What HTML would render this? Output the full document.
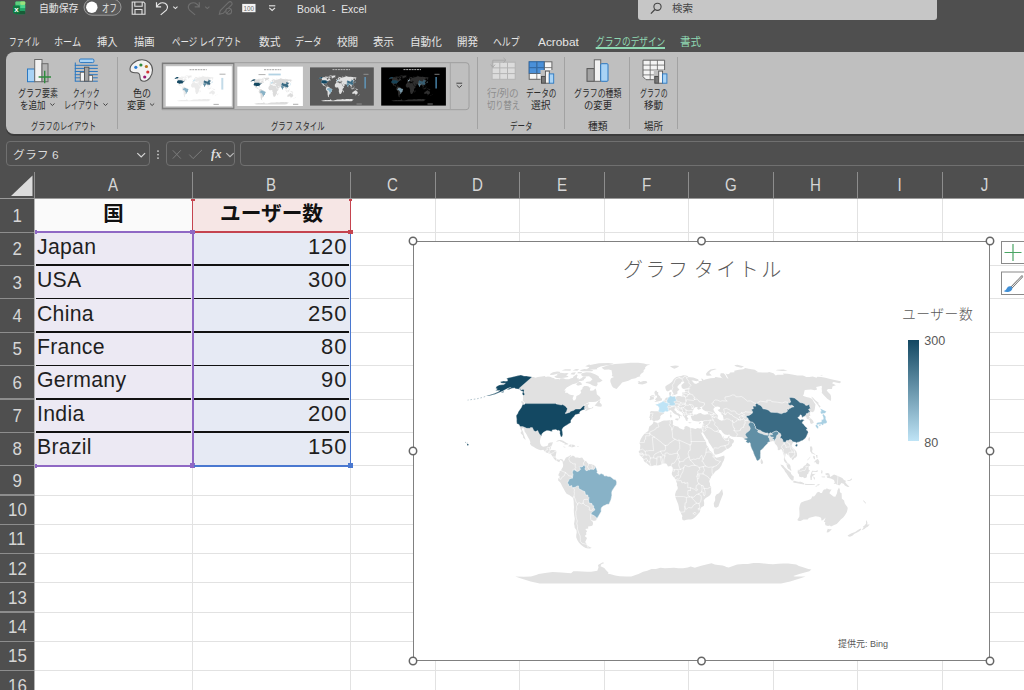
<!DOCTYPE html>
<html lang="ja">
<head>
<meta charset="utf-8">
<title>Book1 - Excel</title>
<style>
html,body{margin:0;padding:0}
#app{position:relative;width:1024px;height:690px;overflow:hidden;background:#fff}
body{width:1024px;height:690px;overflow:hidden;position:relative;background:#fff;font-family:"Liberation Sans","Noto Sans CJK JP",sans-serif}
.abs{position:absolute}
.t{position:absolute;white-space:pre;line-height:16px;transform-origin:0 50%}
#top{position:absolute;left:0;top:0;width:1024px;height:199px;background:#4f4f4f}
#search{position:absolute;left:638px;top:0;width:299px;height:20px;background:#c6c6c6;border-radius:0 0 3px 3px}
#ribbon{position:absolute;left:6px;top:52px;width:1030px;height:82px;background:#bfbfbf;border-radius:8px;box-shadow:0 2px 0 #3b3b3b}
.sep{position:absolute;top:57px;width:1px;height:72px;background:#a2a2a2}
.box{position:absolute;top:141px;height:25px;border:1px solid #707070;border-radius:4px;box-sizing:border-box}
#rowhdr{position:absolute;left:0;top:199px;width:34px;height:491px;background:#4f4f4f}
.ch{position:absolute;top:172px;height:27px;line-height:26px;text-align:center;color:#d6d6d6;font-size:18px}
.ch i{display:inline-block;font-style:normal;transform:scaleX(.84)}
.rh{position:absolute;left:0;width:34px;text-align:center;color:#d6d6d6;font-size:18.800px}
.rh i{display:inline-block;font-style:normal;transform:scaleX(.9)}
.cell{position:absolute;font-size:20px;color:#1f1f1f;white-space:pre}
</style>
</head>

<body>
<div id="app">
<div id="top"></div>
<div id="search"></div>
<div id="ribbon"></div>
<div class="sep" style="left:117px"></div>
<div class="sep" style="left:477px"></div>
<div class="sep" style="left:564px"></div>
<div class="sep" style="left:629px"></div>
<div class="sep" style="left:677px"></div>
<div class="box" style="left:6px;width:144px"></div>
<div class="box" style="left:166px;width:69px"></div>
<div class="box" style="left:240px;width:800px"></div>

<div id="grid">
<div class="abs" style="left:34.5px;top:198.5px;width:158.0px;height:33.7px;background:#fafafa"></div>
<div class="abs" style="left:192.5px;top:198.5px;width:158.0px;height:33.7px;background:#f6e6e5"></div>
<div class="abs" style="left:34.5px;top:232.2px;width:158.0px;height:233.6px;background:#ece9f3"></div>
<div class="abs" style="left:192.5px;top:232.2px;width:158.0px;height:233.6px;background:#e6eaf4"></div>
<div class="abs" style="left:192.0px;top:198.5px;width:1.0px;height:491.5px;background:#e2e2e2"></div>
<div class="abs" style="left:350.0px;top:198.5px;width:1.0px;height:491.5px;background:#e2e2e2"></div>
<div class="abs" style="left:434.5px;top:198.5px;width:1.0px;height:491.5px;background:#e2e2e2"></div>
<div class="abs" style="left:519.0px;top:198.5px;width:1.0px;height:491.5px;background:#e2e2e2"></div>
<div class="abs" style="left:603.5px;top:198.5px;width:1.0px;height:491.5px;background:#e2e2e2"></div>
<div class="abs" style="left:688.0px;top:198.5px;width:1.0px;height:491.5px;background:#e2e2e2"></div>
<div class="abs" style="left:772.5px;top:198.5px;width:1.0px;height:491.5px;background:#e2e2e2"></div>
<div class="abs" style="left:857.0px;top:198.5px;width:1.0px;height:491.5px;background:#e2e2e2"></div>
<div class="abs" style="left:941.5px;top:198.5px;width:1.0px;height:491.5px;background:#e2e2e2"></div>
<div class="abs" style="left:34.5px;top:231.7px;width:989.5px;height:1.0px;background:#e2e2e2"></div>
<div class="abs" style="left:34.5px;top:265.1px;width:989.5px;height:1.0px;background:#e2e2e2"></div>
<div class="abs" style="left:34.5px;top:298.4px;width:989.5px;height:1.0px;background:#e2e2e2"></div>
<div class="abs" style="left:34.5px;top:331.8px;width:989.5px;height:1.0px;background:#e2e2e2"></div>
<div class="abs" style="left:34.5px;top:365.2px;width:989.5px;height:1.0px;background:#e2e2e2"></div>
<div class="abs" style="left:34.5px;top:398.5px;width:989.5px;height:1.0px;background:#e2e2e2"></div>
<div class="abs" style="left:34.5px;top:431.9px;width:989.5px;height:1.0px;background:#e2e2e2"></div>
<div class="abs" style="left:34.5px;top:465.3px;width:989.5px;height:1.0px;background:#e2e2e2"></div>
<div class="abs" style="left:34.5px;top:494.5px;width:989.5px;height:1.0px;background:#e2e2e2"></div>
<div class="abs" style="left:34.5px;top:523.8px;width:989.5px;height:1.0px;background:#e2e2e2"></div>
<div class="abs" style="left:34.5px;top:553.0px;width:989.5px;height:1.0px;background:#e2e2e2"></div>
<div class="abs" style="left:34.5px;top:582.3px;width:989.5px;height:1.0px;background:#e2e2e2"></div>
<div class="abs" style="left:34.5px;top:611.5px;width:989.5px;height:1.0px;background:#e2e2e2"></div>
<div class="abs" style="left:34.5px;top:640.8px;width:989.5px;height:1.0px;background:#e2e2e2"></div>
<div class="abs" style="left:34.5px;top:670.0px;width:989.5px;height:1.0px;background:#e2e2e2"></div>
<div class="abs" style="left:34.5px;top:699.3px;width:989.5px;height:1.0px;background:#e2e2e2"></div>
<div class="abs" style="left:35.5px;top:264.4px;width:155.5px;height:1.8px;background:#111"></div>
<div class="abs" style="left:194.0px;top:264.4px;width:155.0px;height:1.8px;background:#111"></div>
<div class="abs" style="left:35.5px;top:297.7px;width:155.5px;height:1.8px;background:#111"></div>
<div class="abs" style="left:194.0px;top:297.7px;width:155.0px;height:1.8px;background:#111"></div>
<div class="abs" style="left:35.5px;top:331.1px;width:155.5px;height:1.8px;background:#111"></div>
<div class="abs" style="left:194.0px;top:331.1px;width:155.0px;height:1.8px;background:#111"></div>
<div class="abs" style="left:35.5px;top:364.5px;width:155.5px;height:1.8px;background:#111"></div>
<div class="abs" style="left:194.0px;top:364.5px;width:155.0px;height:1.8px;background:#111"></div>
<div class="abs" style="left:35.5px;top:397.8px;width:155.5px;height:1.8px;background:#111"></div>
<div class="abs" style="left:194.0px;top:397.8px;width:155.0px;height:1.8px;background:#111"></div>
<div class="abs" style="left:35.5px;top:431.2px;width:155.5px;height:1.8px;background:#111"></div>
<div class="abs" style="left:194.0px;top:431.2px;width:155.0px;height:1.8px;background:#111"></div>
<div class="abs" style="left:34.5px;top:231.2px;width:159.0px;height:2.0px;background:#8f68c4"></div>
<div class="abs" style="left:34.5px;top:464.8px;width:159.0px;height:2.0px;background:#8f68c4"></div>
<div class="abs" style="left:191.5px;top:232.2px;width:2.0px;height:233.6px;background:#8f68c4"></div>
<div class="abs" style="left:190.0px;top:463.3px;width:4.5px;height:4.5px;background:#8f68c4"></div>
<div class="abs" style="left:34.5px;top:230.2px;width:2.0px;height:4.0px;background:#8f68c4"></div>
<div class="abs" style="left:34.5px;top:463.8px;width:2.0px;height:4.0px;background:#8f68c4"></div>
<div class="abs" style="left:192.2px;top:198.5px;width:1.3px;height:33.7px;background:#c5444f"></div>
<div class="abs" style="left:349.7px;top:198.5px;width:1.4px;height:33.7px;background:#c5444f"></div>
<div class="abs" style="left:194.0px;top:231.3px;width:156.5px;height:1.7px;background:#c5444f"></div>
<div class="abs" style="left:348.0px;top:229.7px;width:4.5px;height:4.5px;background:#c5444f"></div>
<div class="abs" style="left:191.0px;top:198.5px;width:3.5px;height:2.5px;background:#c5444f"></div>
<div class="abs" style="left:348.5px;top:198.5px;width:3.5px;height:2.5px;background:#c5444f"></div>
<div class="abs" style="left:349.5px;top:234.2px;width:1.8px;height:231.6px;background:#4a78d0"></div>
<div class="abs" style="left:193.5px;top:464.8px;width:157.0px;height:2.0px;background:#4a78d0"></div>
<div class="abs" style="left:348.0px;top:463.3px;width:4.5px;height:4.5px;background:#4a78d0"></div>
<div class="abs" style="left:190.0px;top:229.7px;width:4.5px;height:4.5px;background:#8f68c4"></div>
<div id="rowhdr"></div>
<div class="abs" style="left:34.0px;top:172.0px;width:1.0px;height:26.5px;background:#8d8d8d"></div>
<div class="abs" style="left:192.0px;top:172.0px;width:1.0px;height:26.5px;background:#8d8d8d"></div>
<div class="abs" style="left:350.0px;top:172.0px;width:1.0px;height:26.5px;background:#8d8d8d"></div>
<div class="abs" style="left:434.5px;top:172.0px;width:1.0px;height:26.5px;background:#8d8d8d"></div>
<div class="abs" style="left:519.0px;top:172.0px;width:1.0px;height:26.5px;background:#8d8d8d"></div>
<div class="abs" style="left:603.5px;top:172.0px;width:1.0px;height:26.5px;background:#8d8d8d"></div>
<div class="abs" style="left:688.0px;top:172.0px;width:1.0px;height:26.5px;background:#8d8d8d"></div>
<div class="abs" style="left:772.5px;top:172.0px;width:1.0px;height:26.5px;background:#8d8d8d"></div>
<div class="abs" style="left:857.0px;top:172.0px;width:1.0px;height:26.5px;background:#8d8d8d"></div>
<div class="abs" style="left:941.5px;top:172.0px;width:1.0px;height:26.5px;background:#8d8d8d"></div>
<div class="abs" style="left:0.0px;top:198.0px;width:1024.0px;height:1.0px;background:#9a9a9a"></div>
<div class="abs" style="left:34.0px;top:199.0px;width:1.0px;height:491.0px;background:#b4b4b4"></div>
<div class="abs" style="left:0.0px;top:231.6px;width:34.0px;height:1.2px;background:#8d8d8d"></div>
<div class="abs" style="left:0.0px;top:265.0px;width:34.0px;height:1.2px;background:#8d8d8d"></div>
<div class="abs" style="left:0.0px;top:298.3px;width:34.0px;height:1.2px;background:#8d8d8d"></div>
<div class="abs" style="left:0.0px;top:331.7px;width:34.0px;height:1.2px;background:#8d8d8d"></div>
<div class="abs" style="left:0.0px;top:365.1px;width:34.0px;height:1.2px;background:#8d8d8d"></div>
<div class="abs" style="left:0.0px;top:398.4px;width:34.0px;height:1.2px;background:#8d8d8d"></div>
<div class="abs" style="left:0.0px;top:431.8px;width:34.0px;height:1.2px;background:#8d8d8d"></div>
<div class="abs" style="left:0.0px;top:465.2px;width:34.0px;height:1.2px;background:#8d8d8d"></div>
<div class="abs" style="left:0.0px;top:494.4px;width:34.0px;height:1.2px;background:#8d8d8d"></div>
<div class="abs" style="left:0.0px;top:523.7px;width:34.0px;height:1.2px;background:#8d8d8d"></div>
<div class="abs" style="left:0.0px;top:552.9px;width:34.0px;height:1.2px;background:#8d8d8d"></div>
<div class="abs" style="left:0.0px;top:582.2px;width:34.0px;height:1.2px;background:#8d8d8d"></div>
<div class="abs" style="left:0.0px;top:611.4px;width:34.0px;height:1.2px;background:#8d8d8d"></div>
<div class="abs" style="left:0.0px;top:640.7px;width:34.0px;height:1.2px;background:#8d8d8d"></div>
<div class="abs" style="left:0.0px;top:669.9px;width:34.0px;height:1.2px;background:#8d8d8d"></div>
<div class="abs" style="left:0.0px;top:699.2px;width:34.0px;height:1.2px;background:#8d8d8d"></div>
<div class="ch" style="left:34.5px;width:158.0px"><i>A</i></div>
<div class="ch" style="left:192.5px;width:158.0px"><i>B</i></div>
<div class="ch" style="left:350.5px;width:84.5px"><i>C</i></div>
<div class="ch" style="left:435.0px;width:84.5px"><i>D</i></div>
<div class="ch" style="left:519.5px;width:84.5px"><i>E</i></div>
<div class="ch" style="left:604.0px;width:84.5px"><i>F</i></div>
<div class="ch" style="left:688.5px;width:84.5px"><i>G</i></div>
<div class="ch" style="left:773.0px;width:84.5px"><i>H</i></div>
<div class="ch" style="left:857.5px;width:84.5px"><i>I</i></div>
<div class="ch" style="left:942.0px;width:84.5px"><i>J</i></div>
<div class="rh" style="top:198.5px;height:33.7px;line-height:34.7px"><i>1</i></div>
<div class="rh" style="top:232.2px;height:33.4px;line-height:34.4px"><i>2</i></div>
<div class="rh" style="top:265.6px;height:33.4px;line-height:34.4px"><i>3</i></div>
<div class="rh" style="top:298.9px;height:33.4px;line-height:34.4px"><i>4</i></div>
<div class="rh" style="top:332.3px;height:33.4px;line-height:34.4px"><i>5</i></div>
<div class="rh" style="top:365.7px;height:33.4px;line-height:34.4px"><i>6</i></div>
<div class="rh" style="top:399.0px;height:33.4px;line-height:34.4px"><i>7</i></div>
<div class="rh" style="top:432.4px;height:33.4px;line-height:34.4px"><i>8</i></div>
<div class="rh" style="top:465.8px;height:29.2px;line-height:30.2px"><i>9</i></div>
<div class="rh" style="top:495.0px;height:29.2px;line-height:30.2px"><i>10</i></div>
<div class="rh" style="top:524.3px;height:29.2px;line-height:30.2px"><i>11</i></div>
<div class="rh" style="top:553.5px;height:29.2px;line-height:30.2px"><i>12</i></div>
<div class="rh" style="top:582.8px;height:29.2px;line-height:30.2px"><i>13</i></div>
<div class="rh" style="top:612.0px;height:29.2px;line-height:30.2px"><i>14</i></div>
<div class="rh" style="top:641.3px;height:29.2px;line-height:30.2px"><i>15</i></div>
<div class="rh" style="top:670.5px;height:29.2px;line-height:30.2px"><i>16</i></div>
<svg class="abs" style="left:0;top:172px" width="35" height="27"><polygon points="32.5,3.5 32.5,24 11,24" fill="#dcdcdc"/></svg>
<span class="cell" style="left:37.2px;top:234.8px;font-size:22px;line-height:24px;letter-spacing:0.3px;transform:scaleX(0.965);transform-origin:0 50%">Japan</span>
<span class="cell" style="right:676.7px;top:234.8px;font-size:22px;line-height:24px;letter-spacing:0.9px;transform:scaleX(1.0);transform-origin:100% 50%">120</span>
<span class="cell" style="left:37.2px;top:268.2px;font-size:22px;line-height:24px;letter-spacing:0.3px;transform:scaleX(0.965);transform-origin:0 50%">USA</span>
<span class="cell" style="right:676.7px;top:268.2px;font-size:22px;line-height:24px;letter-spacing:0.9px;transform:scaleX(1.0);transform-origin:100% 50%">300</span>
<span class="cell" style="left:37.2px;top:301.6px;font-size:22px;line-height:24px;letter-spacing:0.3px;transform:scaleX(0.965);transform-origin:0 50%">China</span>
<span class="cell" style="right:676.7px;top:301.6px;font-size:22px;line-height:24px;letter-spacing:0.9px;transform:scaleX(1.0);transform-origin:100% 50%">250</span>
<span class="cell" style="left:37.2px;top:335.0px;font-size:22px;line-height:24px;letter-spacing:0.3px;transform:scaleX(0.965);transform-origin:0 50%">France</span>
<span class="cell" style="right:676.7px;top:335.0px;font-size:22px;line-height:24px;letter-spacing:0.9px;transform:scaleX(1.0);transform-origin:100% 50%">80</span>
<span class="cell" style="left:37.2px;top:368.3px;font-size:22px;line-height:24px;letter-spacing:0.3px;transform:scaleX(0.965);transform-origin:0 50%">Germany</span>
<span class="cell" style="right:676.7px;top:368.3px;font-size:22px;line-height:24px;letter-spacing:0.9px;transform:scaleX(1.0);transform-origin:100% 50%">90</span>
<span class="cell" style="left:37.2px;top:401.7px;font-size:22px;line-height:24px;letter-spacing:0.3px;transform:scaleX(0.965);transform-origin:0 50%">India</span>
<span class="cell" style="right:676.7px;top:401.7px;font-size:22px;line-height:24px;letter-spacing:0.9px;transform:scaleX(1.0);transform-origin:100% 50%">200</span>
<span class="cell" style="left:37.2px;top:435.1px;font-size:22px;line-height:24px;letter-spacing:0.3px;transform:scaleX(0.965);transform-origin:0 50%">Brazil</span>
<span class="cell" style="right:676.7px;top:435.1px;font-size:22px;line-height:24px;letter-spacing:0.9px;transform:scaleX(1.0);transform-origin:100% 50%">150</span>
<span class="cell" style="left:34.5px;width:158.0px;text-align:center;top:201.5px;line-height:24px;font-size:20.5px;font-weight:bold;color:#111">国</span>
<span class="cell" style="left:192.5px;width:158.0px;text-align:center;top:201.5px;line-height:24px;font-size:20.700px;font-weight:bold;color:#111">ユーザー数</span>
</div>
<div id="chart" class="abs" style="left:412.5px;top:240.5px;width:577px;height:420px;background:#fff;border:1.5px solid #808080;box-sizing:border-box"></div>
<svg class="abs" style="left:0;top:0" width="1024" height="690" viewBox="0 0 1024 690">
<g color="#e1e1e1"><g id="wml"><path d="M500.5,381.8 503.6,381.1 505.5,381.2 507.7,381.0 507.3,380.1 507.5,379.3 506.4,378.6 508.7,377.8 512.1,377.0 515.2,376.2 518.3,375.6 520.9,375.0 522.5,375.5 523.9,376.1 526.6,376.1 529.1,376.5 532.1,377.0 533.8,377.1 535.3,377.8 537.9,377.1 541.7,376.6 544.8,375.9 545.7,377.1 547.7,376.5 550.1,376.8 552.3,377.7 554.5,378.3 554.6,379.2 558.4,379.1 559.8,379.5 560.6,378.2 563.2,378.3 565.7,379.2 569.0,379.2 571.1,378.3 572.7,378.0 573.5,376.5 576.9,374.3 577.7,375.4 576.8,376.9 577.1,378.3 579.2,378.6 578.4,379.8 581.9,378.0 582.8,376.8 586.0,376.8 585.6,378.2 583.8,379.2 584.3,380.1 581.5,381.1 579.2,381.0 578.4,382.3 576.2,383.2 574.8,383.8 572.5,384.3 569.4,386.0 566.7,387.6 564.1,390.5 565.7,390.6 564.9,392.8 567.4,392.8 569.1,394.2 571.2,395.1 573.9,395.3 572.6,398.2 572.8,399.2 573.5,400.5 575.0,400.2 576.1,398.4 576.4,396.1 579.2,394.8 581.2,392.8 580.5,390.5 582.4,388.9 582.5,387.6 584.2,385.9 586.6,386.0 588.7,386.6 589.2,387.5 590.6,387.6 589.8,390.2 590.8,390.7 593.3,390.5 595.0,388.9 595.7,388.5 596.3,390.5 596.6,392.2 596.8,394.2 597.9,395.2 599.5,396.5 600.6,398.2 600.4,399.1 599.0,400.2 596.0,401.8 592.7,401.9 589.4,401.9 586.8,403.2 584.1,404.7 581.2,406.5 583.2,405.7 586.0,403.9 588.9,403.3 589.5,403.9 587.8,405.0 588.2,406.3 588.1,407.4 589.6,408.0 591.2,408.3 593.2,406.6 593.1,407.9 591.0,408.8 588.5,409.7 585.6,411.2 585.3,410.1 587.4,408.6 585.4,409.0 584.7,409.4 582.7,410.1 580.5,411.1 579.5,412.5 579.9,413.6 578.0,414.1 575.2,414.8 574.7,415.4 574.0,416.8 572.9,417.6 571.9,418.9 570.9,420.3 570.8,421.4 570.8,422.8 569.2,423.5 567.4,424.7 565.7,425.7 563.4,427.2 562.4,428.8 562.0,429.7 562.5,432.3 562.7,434.7 562.0,436.8 561.1,437.1 560.4,435.5 559.8,433.3 560.0,431.6 559.0,430.2 557.5,430.6 555.9,429.6 554.1,429.7 552.2,429.9 552.2,431.4 550.7,431.3 549.0,430.7 546.8,430.6 545.2,431.3 543.1,432.6 541.8,434.0 541.5,435.9 540.4,438.6 539.9,441.0 540.2,443.4 541.4,445.7 543.1,446.8 545.7,446.3 547.6,445.7 548.6,443.1 550.5,442.4 553.0,442.2 552.0,445.0 551.2,446.4 550.5,449.2 549.9,450.1 553.3,450.1 555.7,450.6 556.6,451.3 556.0,454.2 555.5,457.0 556.3,458.4 557.5,459.5 559.4,459.8 560.7,459.0 562.5,459.4 563.4,460.4 562.5,462.3 561.8,460.8 560.2,459.9 559.3,462.2 557.4,461.2 555.6,460.5 553.8,458.4 552.9,457.0 551.0,454.2 549.2,453.6 546.8,452.7 545.2,451.9 543.3,449.8 540.8,450.3 538.4,449.6 536.1,448.5 533.8,447.1 531.5,445.7 529.9,443.7 530.4,442.2 529.4,439.6 528.0,437.2 526.8,434.8 525.9,433.3 524.6,431.6 524.2,428.8 522.5,427.8 521.9,429.5 523.2,432.3 523.8,434.4 524.5,436.5 525.3,438.6 525.6,440.0 524.8,439.3 523.0,437.5 523.1,435.8 521.5,434.1 520.5,433.0 521.7,430.9 520.5,429.0 520.0,426.6 519.1,424.5 516.9,423.7 516.6,420.9 516.7,419.2 516.3,416.8 516.3,415.5 517.9,413.3 518.2,411.9 521.4,407.4 522.6,404.4 524.4,404.6 525.2,403.6 525.1,403.2 524.0,401.8 522.6,400.2 523.1,398.8 522.9,396.4 523.5,395.5 522.7,394.8 522.3,393.5 523.1,391.5 521.4,391.1 520.5,390.5 519.8,389.2 517.5,388.9 515.6,388.8 514.6,387.9 512.2,388.3 509.7,389.2 506.8,390.0 508.7,388.3 511.2,387.4 508.3,388.1 505.0,389.8 502.4,391.3 498.6,392.8 495.1,394.2 491.3,395.2 488.5,395.9 486.3,396.1 491.1,394.4 494.3,393.5 498.2,391.8 500.0,390.6 498.5,390.6 495.5,390.6 497.4,388.9 495.7,388.3 496.3,387.0 496.6,386.4 499.2,385.1 501.5,384.8 503.9,384.5 505.5,383.2 503.6,383.2 500.9,383.1 500.5,381.8Z M601.6,367.4 608.4,365.2 614.9,363.9 622.8,363.5 630.8,362.8 638.2,362.7 643.9,363.5 646.6,364.3 650.4,364.5 647.1,365.6 645.2,367.2 645.2,368.7 643.6,370.3 643.6,371.9 641.1,373.7 639.8,375.4 640.6,376.2 637.6,377.1 635.5,378.3 631.7,378.9 628.4,380.7 624.8,381.7 622.1,382.6 620.6,384.5 618.3,387.0 616.6,388.9 615.2,388.6 613.1,387.6 611.8,385.7 611.1,383.8 610.4,382.0 610.3,380.1 611.1,378.3 614.0,377.1 611.8,375.9 612.3,374.2 611.9,372.5 611.6,370.3 608.8,369.6 604.4,369.8 602.9,368.7 601.6,367.4Z M596.2,386.5 592.7,385.6 590.1,384.1 587.8,383.2 585.4,383.1 586.7,381.8 590.2,381.6 592.5,379.2 590.6,377.4 589.1,376.3 584.3,376.6 582.8,376.2 581.0,375.1 582.0,373.3 586.3,372.2 590.4,372.4 592.4,373.2 595.0,374.3 597.4,375.4 598.8,376.5 599.0,377.7 601.3,379.4 602.6,380.5 599.8,382.2 597.2,382.6 597.7,384.5 596.2,386.5Z M568.2,376.9 564.1,377.8 559.2,378.2 555.9,377.8 554.3,376.6 557.7,374.9 556.5,373.7 560.6,372.7 564.5,373.2 567.0,372.9 568.6,373.4 566.1,375.4 568.3,376.3 568.2,376.9Z M549.9,374.3 550.7,375.1 553.8,374.8 560.1,372.9 559.7,371.7 557.1,371.4 552.9,372.3 550.4,373.7Z M597.4,369.2 593.8,369.6 586.5,369.3 589.2,367.7 588.9,365.2 593.9,364.3 599.0,363.3 608.3,363.0 613.8,363.5 610.3,364.8 605.6,365.6 600.7,366.6 596.8,368.2Z M592.2,371.3 582.0,371.2 579.6,370.3 584.3,369.1 589.7,369.5 593.2,370.2Z M590.2,367.5 585.2,366.3 589.0,364.6 591.1,365.3Z M570.5,370.8 561.5,370.6 565.1,369.2 570.9,369.2Z M581.3,373.4 577.1,373.2 578.2,372.1 582.2,371.9Z M574.2,374.8 570.4,374.2 571.9,372.7 575.9,372.2Z M577.3,370.8 572.5,370.6 576.0,369.1 579.2,369.2Z M582.2,384.5 577.9,385.7 576.0,384.2 579.2,381.7 581.0,382.6Z M594.6,405.4 597.9,406.6 601.2,406.8 601.9,405.5 601.4,404.0 599.6,402.5 600.3,400.1 598.4,401.1 595.8,404.3Z M524.2,404.4 522.1,403.9 521.0,401.3 523.1,401.5 524.2,403.2Z M555.7,441.6 558.2,440.2 560.7,439.9 563.1,440.7 565.4,442.2 567.1,443.3 568.6,444.0 567.6,444.4 564.2,444.6 565.0,443.4 563.4,442.9 561.7,441.9 559.4,441.0 557.4,441.5Z M568.1,446.3 570.0,444.4 571.9,444.4 574.3,445.0 575.6,446.3 574.2,446.7 571.6,447.5 570.4,446.8Z M563.3,446.5 565.7,447.0 565.0,447.4 563.3,447.1Z M577.0,446.4 578.9,446.5 578.7,447.1 577.0,447.1Z M563.4,460.4 564.0,461.2 565.0,459.2 565.8,457.7 567.1,457.0 569.0,456.3 570.3,455.3 571.2,455.0 570.7,457.0 572.8,455.4 574.6,456.6 575.2,457.5 577.7,457.5 579.5,458.1 582.1,457.4 582.9,458.4 584.1,460.5 586.3,461.2 587.5,462.9 588.7,464.0 591.2,464.2 592.5,464.3 594.3,465.4 595.5,466.3 596.8,469.7 597.4,471.4 596.8,472.5 599.3,474.6 601.2,473.5 603.7,474.6 604.4,476.0 606.3,475.8 608.2,476.5 610.0,476.4 611.9,477.8 613.6,479.3 615.7,479.7 616.5,481.5 616.7,482.9 616.2,484.9 614.6,487.0 613.5,488.8 612.3,490.5 611.7,492.5 611.9,495.3 611.4,497.4 610.9,499.9 609.8,502.2 609.3,503.6 608.7,504.3 606.9,504.3 605.1,505.3 603.3,506.0 601.6,507.5 601.1,509.1 601.2,511.6 599.9,513.7 598.9,515.4 597.8,517.2 596.7,519.1 596.2,520.3 595.0,520.8 593.3,520.8 591.4,520.1 590.7,519.9 592.5,521.6 593.1,523.0 592.7,525.2 591.5,526.0 588.1,526.4 588.3,528.5 585.3,529.1 587.1,531.2 586.1,532.6 586.4,534.6 584.7,536.0 587.0,538.0 586.1,540.0 585.2,542.0 586.9,544.5 587.8,546.0 590.2,547.3 591.7,547.7 590.1,548.4 588.1,548.6 585.7,548.0 583.5,546.7 581.2,545.1 579.0,542.7 577.3,540.0 576.2,537.3 576.3,534.6 576.7,532.6 576.5,530.2 574.7,527.8 574.5,525.7 574.0,523.9 574.4,521.6 574.8,518.8 574.2,515.4 573.9,512.6 573.8,509.8 574.0,507.1 573.8,505.0 573.7,501.5 573.2,498.1 571.7,496.7 569.6,495.3 566.6,493.7 565.1,491.6 563.8,489.1 562.2,486.3 560.9,483.6 559.9,481.9 558.3,480.8 558.1,478.7 559.3,477.2 559.7,476.6 558.4,475.5 558.6,473.9 559.6,472.4 559.5,471.4 560.9,470.4 561.6,469.0 562.9,466.9 563.2,464.7 562.5,462.3Z M653.4,422.0 654.1,421.8 656.8,422.7 658.0,423.0 660.4,422.0 662.2,421.0 663.9,420.6 666.3,420.6 669.2,420.3 671.9,419.9 672.5,420.6 673.3,420.3 672.8,421.7 673.2,423.1 672.6,424.2 673.5,425.2 675.4,426.1 678.4,426.8 679.0,428.0 680.9,428.8 683.4,429.7 684.5,428.8 684.4,426.9 686.1,426.1 688.0,426.5 690.5,427.9 692.9,428.3 695.4,428.9 697.7,428.0 699.3,428.5 699.8,430.3 701.6,434.0 703.3,437.2 704.3,439.3 706.0,441.5 706.5,445.0 708.2,447.1 709.6,450.6 711.6,452.0 713.5,454.2 714.6,454.9 714.5,456.3 716.2,457.7 718.7,457.3 721.1,456.6 724.2,455.6 724.6,457.7 723.8,460.5 722.6,462.6 721.4,465.4 719.6,468.3 717.7,470.0 715.8,471.1 713.9,473.2 712.7,474.9 711.4,476.0 710.7,478.0 709.7,479.4 709.2,481.5 710.0,483.6 710.0,485.6 711.2,487.0 711.1,489.8 711.3,492.5 710.2,494.9 708.3,496.4 705.7,498.1 703.7,500.2 704.2,502.9 704.0,505.7 700.8,507.8 700.5,509.1 699.9,511.9 698.3,513.7 696.8,515.6 694.5,517.8 692.6,519.1 691.0,519.5 688.4,519.6 686.6,519.8 684.2,520.6 682.8,519.9 682.3,519.5 682.0,517.7 682.4,516.1 681.3,514.0 680.4,511.9 679.1,509.8 678.8,507.1 678.2,504.2 677.1,501.5 675.9,498.5 675.1,496.0 675.1,494.3 676.0,491.2 677.7,489.1 677.7,487.0 676.7,484.9 677.2,484.0 675.9,480.8 675.8,479.4 674.2,477.8 672.7,476.0 671.7,473.9 672.1,471.8 672.7,470.4 672.7,468.3 672.4,466.9 671.1,466.0 669.2,466.3 668.0,466.4 667.1,464.7 666.1,463.6 663.5,463.6 661.7,464.3 659.1,465.2 657.3,465.6 654.7,465.2 652.9,465.7 651.0,466.3 649.1,465.3 647.2,463.6 645.9,462.8 644.7,461.9 643.7,460.5 643.5,458.7 641.9,457.3 641.0,456.3 639.5,455.0 639.4,453.4 638.6,451.8 639.9,449.9 640.2,447.1 640.3,445.0 639.4,442.9 640.7,439.3 642.3,436.5 644.6,433.4 646.4,432.3 648.3,430.9 648.7,428.8 649.3,426.6 651.4,424.9 652.7,423.8Z M722.1,489.1 723.1,493.9 722.3,496.0 720.4,500.8 718.4,506.4 716.1,507.8 714.3,507.1 713.7,503.6 715.2,500.2 715.1,496.7 716.4,494.6 719.0,493.2 721.0,490.5Z M649.8,420.3 650.1,418.2 649.3,417.8 650.1,414.7 649.9,411.9 651.3,410.9 654.1,411.2 656.4,411.2 658.3,411.3 658.9,409.8 659.1,407.7 658.0,406.1 655.2,404.7 657.1,403.9 658.5,404.0 658.6,402.8 660.1,403.2 660.6,402.6 662.0,401.9 663.1,400.9 664.2,400.3 664.9,399.5 665.5,398.2 666.8,397.5 667.8,397.4 669.4,397.1 669.6,396.1 669.3,394.8 668.9,392.8 670.5,392.1 671.2,391.9 671.3,393.5 670.9,394.8 670.7,395.7 672.0,396.4 673.3,396.4 674.7,396.3 675.6,397.0 677.8,396.1 679.9,395.9 681.0,396.3 682.5,395.5 682.2,393.5 682.5,392.2 684.2,392.8 685.3,391.8 684.8,390.2 684.2,389.8 686.7,389.4 688.7,389.3 690.8,389.0 688.9,388.3 686.5,388.4 683.6,389.0 681.9,388.1 681.5,386.6 681.4,385.1 683.5,383.2 684.5,382.2 683.2,381.6 681.5,381.7 680.8,383.2 678.9,384.8 677.5,386.4 677.6,388.0 679.4,389.2 678.7,390.2 677.3,391.5 677.5,393.5 676.9,394.0 675.4,394.7 674.0,394.9 673.7,393.9 672.8,392.2 671.8,390.2 671.0,389.6 669.6,390.6 667.8,391.5 666.2,390.5 665.4,388.3 665.3,386.4 667.2,385.1 669.1,384.1 670.8,382.8 672.2,381.4 673.4,379.5 674.7,378.3 676.3,377.1 678.5,376.5 681.1,375.9 683.3,375.3 685.9,375.4 688.4,376.2 687.7,376.9 690.5,377.2 693.3,377.5 698.0,379.2 698.9,380.5 696.8,381.2 693.3,380.6 691.4,380.4 693.2,382.0 693.9,383.2 696.2,384.0 697.0,383.2 698.8,382.9 698.3,381.4 700.0,380.9 702.0,381.1 701.2,378.4 703.0,378.9 703.5,380.3 705.1,379.4 709.3,378.6 710.6,378.3 714.6,378.0 715.4,376.9 718.8,377.4 720.8,377.7 723.6,378.6 721.8,377.7 720.1,375.4 720.7,373.3 723.6,373.2 725.2,374.8 726.8,377.7 728.5,378.9 725.5,373.3 727.0,374.2 729.1,374.0 730.1,372.5 734.5,372.2 734.2,370.8 738.9,369.8 743.3,369.2 745.2,368.0 748.5,368.8 754.8,369.8 758.0,371.9 755.0,371.9 757.8,372.2 762.7,372.6 767.4,372.6 769.3,372.1 773.5,373.3 775.7,375.4 777.5,374.7 780.3,374.8 783.9,374.8 782.8,373.4 787.7,373.8 793.5,374.7 797.4,375.5 802.9,375.6 806.4,377.0 809.4,376.9 812.7,376.6 816.5,377.7 817.4,376.8 821.2,376.9 825.4,377.8 831.2,379.2 837.0,380.5 840.6,381.2 840.8,382.6 839.4,383.2 833.7,382.0 832.7,382.6 832.1,383.2 835.9,385.2 834.2,385.7 832.4,386.6 832.0,388.9 827.9,388.9 826.7,390.5 828.2,392.2 830.2,394.2 830.9,395.7 831.1,397.9 831.1,399.5 830.6,400.9 827.3,398.8 824.1,395.5 821.7,392.8 822.0,391.3 821.6,388.6 822.0,387.0 821.4,385.7 818.6,386.6 816.1,387.0 817.1,389.6 814.7,390.2 811.0,389.6 807.7,389.8 804.8,390.0 804.2,391.9 803.8,394.2 802.9,395.7 806.3,397.0 809.7,397.8 812.2,399.1 814.0,402.2 815.5,404.6 815.1,406.8 814.7,409.4 814.1,411.2 812.5,412.2 810.4,411.6 810.2,412.9 809.9,414.0 810.4,415.4 808.7,416.4 810.6,418.2 812.7,420.3 813.8,422.4 813.1,423.3 811.0,424.0 810.1,422.4 809.8,420.6 808.2,419.2 806.9,418.9 806.2,416.8 804.9,416.1 803.0,416.9 802.0,417.8 801.7,415.4 800.2,414.8 799.4,416.6 797.8,417.5 798.6,418.6 800.3,419.9 802.0,419.2 804.5,420.0 802.8,421.4 802.1,423.1 803.7,424.2 805.0,426.2 806.9,427.8 807.4,428.9 806.0,429.7 807.9,430.9 808.2,432.6 807.3,434.4 806.7,436.1 805.8,437.8 804.2,439.3 802.6,440.5 800.9,441.0 799.2,441.9 796.8,442.4 796.5,443.9 795.8,442.2 794.0,442.0 792.6,442.9 792.2,444.0 791.5,445.7 792.7,447.8 794.2,449.2 796.1,450.9 797.0,453.4 797.1,455.8 795.8,457.4 794.3,458.0 794.0,459.1 792.2,460.2 791.8,458.4 790.1,457.5 789.0,455.8 787.3,454.6 786.5,453.6 785.6,453.6 785.4,455.6 784.9,457.7 785.3,459.5 786.3,460.8 787.1,462.6 788.4,463.3 789.3,464.0 790.5,466.1 790.7,468.5 791.6,470.5 790.8,470.7 789.5,469.5 787.9,468.4 787.0,466.6 786.5,464.3 785.7,462.9 784.3,461.2 783.8,459.8 784.0,457.7 783.9,455.6 783.0,452.7 782.2,450.6 781.7,449.2 780.5,449.2 779.1,450.2 777.8,449.9 777.8,447.8 776.9,445.7 775.5,444.3 774.5,443.1 773.5,441.0 771.9,441.2 770.2,441.7 769.0,441.9 767.8,442.4 767.7,443.6 766.3,444.7 764.8,446.3 763.0,448.5 761.9,449.5 760.5,450.6 760.5,453.4 760.4,455.6 760.5,458.0 759.5,459.4 758.7,459.9 757.7,461.1 756.4,459.8 755.7,457.7 754.5,455.6 753.7,453.4 753.0,451.3 751.9,449.2 751.0,447.1 750.6,445.4 750.2,442.9 749.7,442.6 748.0,443.3 745.7,441.5 746.9,440.2 744.6,439.6 744.2,439.1 743.0,437.8 742.2,437.2 739.4,436.9 736.4,437.1 735.8,437.1 732.7,436.7 730.4,436.0 729.3,434.4 727.5,435.0 725.0,434.4 723.0,433.1 721.1,430.3 719.6,429.7 719.1,430.2 718.6,431.2 719.7,433.0 721.4,434.8 721.9,436.5 722.7,437.4 723.0,435.7 723.7,437.2 723.6,438.2 725.5,438.5 727.3,438.2 728.9,435.8 729.3,435.4 729.6,437.5 731.1,438.9 732.7,439.3 734.1,440.7 733.3,442.9 732.1,443.7 731.9,445.7 730.5,447.1 728.8,448.5 726.4,449.2 724.0,450.9 721.6,452.7 719.1,453.7 716.7,454.4 714.8,454.6 714.1,453.0 713.8,451.3 713.5,449.4 711.9,447.1 710.6,445.0 708.8,442.4 708.0,440.0 706.4,438.2 705.0,435.8 703.2,433.0 702.7,430.9 702.2,433.0 701.9,433.3 700.8,431.9 699.8,430.3 699.3,428.5 701.6,428.3 702.2,426.6 702.4,425.2 703.1,423.7 702.9,421.7 703.1,420.9 701.1,420.7 698.8,421.6 696.4,421.3 694.6,420.9 692.6,420.6 691.4,418.2 691.0,416.8 690.8,415.9 692.3,415.5 694.0,415.5 694.1,414.4 696.7,414.4 698.9,413.3 700.8,413.1 702.5,414.3 704.9,414.8 708.2,414.0 707.9,412.3 705.3,410.9 703.5,409.9 702.1,408.8 702.3,407.0 703.3,406.2 701.2,406.8 699.6,407.4 701.5,408.6 700.5,409.1 698.3,409.8 697.0,408.4 698.0,407.6 695.9,406.9 694.6,407.7 693.9,408.8 693.1,410.5 692.4,411.9 692.3,412.9 692.9,414.0 693.9,414.5 692.2,414.7 690.8,415.1 690.5,415.2 688.1,415.0 687.7,415.8 686.8,415.5 687.0,417.1 688.5,418.6 687.6,419.2 687.5,421.0 686.7,421.0 685.8,420.3 685.2,418.5 683.9,416.8 682.9,415.4 682.8,413.6 681.6,412.6 679.8,411.5 678.0,410.2 676.8,408.8 675.8,408.3 674.3,408.7 674.5,410.2 675.9,411.2 677.0,412.9 678.8,413.4 679.1,414.0 681.9,415.8 681.7,416.4 680.1,415.4 679.7,416.4 680.3,417.5 679.7,418.3 678.8,419.0 679.1,417.8 678.6,416.1 677.2,415.1 674.8,414.0 673.0,412.6 672.1,411.2 670.6,410.1 668.9,410.8 667.2,411.8 665.0,411.2 664.0,412.6 664.1,413.4 661.3,415.0 660.1,416.8 660.4,417.9 659.6,419.2 658.0,420.6 655.1,420.7 653.8,421.7 653.0,420.6 651.6,420.0Z M654.2,402.1 656.6,401.8 658.8,401.3 661.8,400.6 662.2,398.6 660.7,398.2 660.2,396.5 658.8,395.2 658.1,394.2 658.3,392.1 656.8,391.9 657.1,390.7 655.3,390.7 654.4,392.2 654.7,394.2 655.4,394.8 655.1,395.7 656.7,395.6 657.2,397.1 657.0,397.8 655.6,397.8 655.9,398.8 654.8,399.8 656.6,400.3 655.5,400.9Z M653.9,399.2 653.8,397.5 654.6,396.1 653.6,395.2 651.8,395.2 649.8,396.5 650.3,397.9 649.3,399.5 650.1,400.2 652.3,399.5Z M638.6,384.0 642.4,384.6 646.4,383.2 647.4,382.2 646.2,381.0 643.4,381.1 640.4,382.0 639.2,380.9 637.6,381.8 639.3,382.6 637.6,382.8Z M669.9,366.3 672.6,368.1 674.4,368.7 677.3,367.5 679.3,366.0 675.3,365.6Z M706.4,375.4 708.0,375.7 711.8,375.4 709.2,373.1 711.3,370.8 716.9,368.9 714.7,368.7 710.4,369.6 707.8,371.4 706.0,373.7Z M736.0,366.6 741.3,367.7 744.0,366.6 737.4,364.8 734.2,365.2Z M775.7,370.3 782.0,371.0 787.6,370.8 783.6,369.6 777.3,369.8Z M820.0,375.4 822.1,374.8 822.6,375.6Z M819.7,407.7 820.6,406.6 817.8,403.6 819.2,403.3 815.3,400.2 813.1,397.8 811.2,396.4 812.2,398.2 814.3,400.9 817.2,404.3Z M809.5,441.5 810.0,437.9 809.4,436.9 808.6,437.9 808.2,440.0Z M795.1,445.4 796.3,446.8 797.4,446.0 797.8,444.7 796.5,444.1Z M760.6,461.2 761.1,458.8 762.5,460.5 763.2,462.6 762.6,463.8 761.2,464.0 760.7,462.6Z M810.2,449.9 809.9,446.4 812.0,446.4 812.5,449.2 812.0,451.3 812.7,452.7 815.4,454.2 815.2,454.7 811.5,453.2 810.9,452.0 810.1,451.3Z M813.7,462.6 815.4,460.5 817.8,458.7 819.3,461.2 819.1,463.6 818.2,464.6 816.3,463.6 815.5,461.9Z M815.9,454.9 817.4,455.1 817.5,458.1 816.5,457.7Z M813.1,455.8 814.8,456.3 815.1,459.5 814.1,459.1 813.3,457.7Z M807.5,460.6 810.2,457.5 810.3,456.6 809.3,457.7 807.2,459.9Z M797.9,469.8 799.3,470.1 800.5,468.8 802.7,468.0 803.9,466.1 805.7,465.0 807.1,462.8 808.4,463.6 810.4,465.2 808.9,466.4 808.6,467.6 808.7,469.7 810.3,471.1 808.8,471.4 808.4,473.6 807.1,474.6 806.8,477.3 804.8,478.2 802.7,476.9 801.1,477.3 799.1,476.5 798.9,474.3 797.7,472.9 797.7,471.1Z M780.3,464.6 783.1,465.2 784.6,467.3 787.0,469.4 788.9,471.1 790.8,472.5 791.2,473.9 792.2,475.3 793.8,476.6 793.5,480.5 791.8,480.4 790.0,478.7 788.2,476.2 786.7,473.7 785.1,471.8 784.2,469.7 781.9,467.3Z M792.6,481.9 794.3,480.8 796.8,481.5 799.3,481.9 799.9,481.5 802.0,482.2 804.2,483.3 804.1,484.5 801.0,484.1 797.3,483.3 794.2,482.7Z M810.6,480.1 811.8,480.1 812.0,476.6 813.0,476.6 814.6,477.3 815.1,479.7 813.9,479.1 813.5,477.5 812.6,476.2 814.0,475.0 815.7,473.7 813.4,473.9 811.8,473.6 812.8,471.8 817.3,471.9 818.1,470.2 815.3,471.1 812.2,470.8 811.3,472.5 810.2,476.6Z M804.8,483.8 807.3,484.0 809.8,484.0 812.3,484.1 814.8,484.0 814.8,484.7 811.0,484.9 807.2,484.9 804.7,484.7Z M815.2,486.7 817.3,484.5 819.8,484.1 819.2,484.9 816.5,486.6Z M821.0,473.2 821.6,469.7 822.5,471.1 822.3,473.5Z M821.5,476.6 825.1,476.6 824.7,477.6 821.8,477.3Z M825.4,473.6 827.3,473.1 829.2,473.6 830.3,477.1 834.0,474.6 837.9,476.1 842.3,477.9 844.0,480.1 846.2,480.9 845.1,481.9 846.8,484.3 849.5,486.7 847.8,486.9 844.8,485.6 843.7,483.7 841.3,483.1 839.8,485.2 837.3,485.1 835.6,483.7 833.7,484.1 834.8,482.5 834.0,480.1 830.9,478.6 828.4,478.0 827.5,478.0 826.6,476.4 828.9,475.7 826.6,475.3 825.3,474.3Z M847.2,480.2 849.7,480.1 851.7,478.3 852.0,479.4 850.3,480.8 847.7,481.1Z M800.5,503.6 801.1,502.6 804.8,501.0 807.7,500.2 811.0,499.0 812.4,496.3 814.0,496.4 815.4,494.9 817.0,492.5 819.0,491.7 820.5,493.0 822.0,493.1 822.9,490.8 824.0,489.6 826.2,489.2 826.5,488.3 829.3,489.4 831.6,489.4 830.2,491.4 829.4,493.2 831.6,494.9 833.5,496.6 835.3,496.7 837.0,493.2 837.5,490.2 839.0,487.4 839.9,489.8 839.9,492.3 841.6,493.2 841.8,496.7 841.8,498.6 844.1,500.4 844.7,503.3 845.8,505.0 847.4,507.1 847.7,508.4 846.9,511.9 844.8,515.4 843.2,517.4 840.8,519.4 838.6,521.9 836.7,524.1 834.1,524.9 831.0,526.5 829.9,525.4 828.0,526.1 825.5,525.3 825.0,523.6 825.3,521.9 823.8,521.9 824.6,520.2 825.6,517.6 823.7,519.5 822.1,520.6 821.5,520.5 821.1,517.8 818.9,516.7 815.5,516.2 811.5,517.2 808.8,518.1 807.7,519.4 803.5,519.4 800.6,520.9 798.8,520.9 797.3,519.9 799.3,516.7 799.5,514.0 799.4,511.2 799.2,508.4 799.7,505.7Z M827.8,528.7 829.5,529.3 831.8,529.0 830.4,530.8 828.6,532.3 826.7,532.6 826.9,530.9Z M866.0,520.1 867.0,521.6 867.5,523.0 867.0,524.5 869.7,524.5 867.7,526.7 866.1,527.4 864.5,528.9 862.2,530.0 862.0,529.4 863.6,527.8 862.9,526.8 864.8,525.3 866.1,523.6 866.0,521.6Z M860.5,528.5 861.3,529.4 859.7,530.9 857.1,532.6 854.5,533.7 852.3,535.7 849.9,536.8 848.1,536.2 847.6,535.6 851.0,533.5 855.1,531.9 857.6,530.2Z M863.3,500.3 864.8,501.5 866.2,503.3 865.5,503.5 863.6,501.5 863.0,500.6Z M515.3,576.6 524.0,576.8 531.0,576.4 533.6,575.7 536.1,574.9 538.7,574.1 545.1,572.9 552.7,572.1 561.5,572.4 571.1,573.2 573.3,571.3 577.6,571.3 586.8,571.8 591.2,571.8 597.3,570.7 598.5,567.4 598.0,565.1 600.2,563.8 602.3,562.6 603.8,562.4 603.6,563.4 601.5,564.0 600.5,566.3 604.3,568.0 606.1,570.2 608.4,572.4 608.2,573.9 609.9,573.9 615.2,575.4 619.8,576.2 626.4,576.4 631.3,576.4 635.5,574.9 638.5,573.9 643.1,571.8 647.2,570.7 651.5,569.1 655.9,568.9 660.4,567.8 664.9,568.2 669.5,568.0 674.0,567.8 678.5,568.2 683.0,568.3 687.7,567.4 690.7,566.6 694.9,567.8 697.0,566.9 702.2,565.5 707.3,564.3 711.6,563.3 714.7,564.6 718.1,565.1 722.6,565.5 724.9,566.3 726.3,566.9 728.7,567.4 732.2,566.3 737.2,564.6 743.2,564.1 748.0,564.0 753.4,563.1 759.1,563.1 764.3,563.6 768.7,564.0 773.0,564.3 778.4,563.8 783.5,563.4 788.2,563.4 792.1,564.1 796.2,564.6 798.9,566.1 802.3,566.9 805.3,568.0 808.3,568.9 811.4,569.6 809.4,571.3 804.8,572.4 799.3,573.9 793.3,575.9 794.7,576.4 799.1,576.6 805.5,576.6 801.3,578.1 795.7,579.8 790.2,581.5 785.6,582.4 781.1,583.4 539.7,583.4 535.2,582.4 530.6,581.5 525.1,579.8 519.5,578.1Z M674.9,418.9 676.2,418.6 678.7,418.5 678.3,420.3 677.2,420.6 675.1,419.5Z M669.9,414.8 671.0,414.4 671.7,415.4 671.6,417.2 670.9,417.5 670.2,417.2 670.1,415.7Z M670.3,412.7 671.1,411.9 671.3,413.3 671.0,414.1 670.4,413.6Z M688.3,422.4 689.4,422.3 691.6,422.7 691.5,423.1 689.7,423.3 688.3,422.8Z M698.8,423.1 699.5,422.5 701.4,422.1 700.8,423.1 699.7,423.7 698.9,423.5Z M671.9,395.1 673.4,394.0 673.6,395.1 673.0,395.6 672.2,395.3Z" fill="currentColor"/></g></g>
<path d="M715.2,407.0 717.3,406.6 719.7,407.0 720.1,408.7 718.2,409.8 717.4,409.8 719.1,411.6 720.9,412.6 720.9,414.0 722.6,415.0 723.3,417.6 723.7,420.0 721.7,420.7 719.2,419.7 717.7,418.3 717.8,416.8 717.8,415.2 715.5,413.3 714.6,411.9 713.4,409.8 713.8,408.3Z" fill="#fff"/>
<path d="M545.3,452.0 546.1,449.9 547.7,449.8 547.0,448.2 547.4,447.4 549.6,447.4 550.9,446.4 M549.6,447.4 549.3,450.1 549.8,450.1 M547.9,453.0 548.8,452.2 549.1,451.8 550.4,450.3 M548.8,452.2 549.9,452.9 550.7,453.6 M551.1,454.2 552.1,453.0 553.2,452.9 554.6,451.6 556.6,451.3 M553.0,456.8 554.2,457.0 555.5,457.1 M556.3,461.1 556.4,459.7 556.8,459.0 M562.5,462.3 563.4,460.4 M571.6,444.7 571.3,446.3 571.4,447.4 M571.1,455.8 569.6,457.0 568.8,459.1 569.5,460.6 570.0,461.9 571.4,462.5 573.1,463.9 575.5,463.8 575.1,466.1 575.7,467.6 575.0,468.5 576.0,470.8 M585.2,460.6 583.4,463.0 583.4,464.2 584.0,465.2 M588.6,464.0 588.3,465.4 587.4,466.9 588.0,467.8 589.2,469.8 M592.5,464.3 592.0,465.4 592.4,467.6 591.8,469.3 M561.0,470.5 562.8,471.5 564.3,472.1 565.5,472.6 M559.3,477.2 559.2,478.6 561.0,479.4 561.8,477.3 564.1,476.0 565.5,472.6 M565.5,472.6 567.7,474.3 568.6,475.8 572.1,476.2 572.4,478.3 M573.3,487.6 574.5,489.8 574.2,491.4 574.4,493.7 574.2,494.9 573.9,496.4 574.0,496.7 M574.0,496.7 573.2,497.8 M574.0,496.7 575.1,498.8 575.7,500.8 576.2,502.2 577.7,504.0 M577.7,504.0 578.6,502.6 580.3,503.1 581.2,504.0 583.1,503.2 M583.1,503.2 583.4,500.8 583.9,499.6 587.2,499.2 588.4,500.4 M583.1,503.2 585.4,505.4 586.7,505.7 589.7,507.5 589.0,510.1 591.6,510.4 592.4,510.2 593.6,507.9 M577.7,504.0 576.6,506.4 576.8,509.1 575.7,511.9 575.9,514.7 576.3,518.1 577.3,520.9 576.8,523.6 577.6,526.4 577.5,529.1 578.9,533.2 580.2,536.0 580.3,539.3 580.4,541.4 582.2,543.3 585.0,544.0 586.9,544.5 M586.9,544.9 588.2,547.8 M590.8,519.5 590.6,517.4 590.8,514.3 M650.3,413.4 651.0,413.3 652.8,413.4 653.3,413.8 652.4,414.7 652.4,416.1 651.7,416.6 652.2,417.5 651.9,418.6 651.7,420.0 M664.1,400.3 665.1,400.3 665.8,400.2 666.7,400.6 666.8,401.1 M666.8,402.9 666.6,402.1 667.1,401.9 M668.3,407.9 669.4,407.6 669.9,407.3 670.5,407.7 670.8,407.0 672.1,406.6 M671.1,405.7 671.1,406.2 672.1,406.6 M672.1,406.6 674.0,406.3 674.3,406.8 675.7,407.0 M675.7,407.0 676.7,407.2 678.3,406.6 678.4,406.5 M678.4,406.5 678.7,405.7 679.3,405.0 M675.6,403.9 676.9,403.6 679.0,404.1 679.3,405.0 M676.7,400.9 678.1,401.4 678.8,401.8 679.7,401.8 681.0,402.9 M681.0,402.9 680.2,403.6 679.4,403.9 679.0,404.1 M681.0,402.9 682.4,403.2 684.0,403.0 685.3,403.5 M685.3,403.5 685.5,401.7 686.5,401.4 685.9,400.2 M685.9,400.2 685.7,398.7 685.3,397.0 M685.3,397.0 684.5,396.3 M684.5,396.3 681.3,396.3 M684.5,396.3 684.4,395.5 682.8,395.1 M682.4,394.0 684.2,393.6 686.3,393.6 688.2,394.5 M685.3,391.7 686.5,391.5 688.6,392.2 M688.6,392.2 688.7,390.3 688.7,389.6 M688.6,392.2 689.3,393.1 689.8,393.9 M689.8,393.9 688.2,394.5 M688.2,394.5 687.6,395.6 687.4,396.4 685.3,397.0 M689.8,393.9 692.7,394.7 692.9,395.7 695.2,397.6 693.8,398.0 694.6,399.4 M685.9,400.2 687.3,399.7 690.1,400.1 693.4,400.5 694.6,399.4 M694.6,399.4 696.9,399.1 698.9,400.9 699.2,401.7 702.0,402.4 704.4,402.8 704.4,405.2 703.0,406.2 M685.3,403.5 684.9,404.4 M684.9,404.4 685.8,405.0 688.0,405.4 689.8,404.6 M689.8,404.6 691.4,404.6 692.7,405.1 694.0,407.2 692.1,408.4 M689.8,404.6 691.8,406.5 692.1,408.4 M692.1,408.4 693.9,408.8 M679.3,405.0 681.3,405.2 683.0,404.3 684.9,404.4 M685.8,405.0 684.1,407.2 683.2,407.6 M683.2,407.6 681.6,407.9 M681.6,407.9 680.0,407.9 678.9,407.0 678.4,406.5 M678.9,407.0 678.0,407.4 677.6,408.4 675.7,408.4 M675.7,407.0 675.7,408.3 M683.2,407.6 684.5,408.8 685.9,409.5 686.1,410.2 M686.1,410.2 688.8,410.9 691.0,410.4 692.9,410.9 M686.1,410.2 686.0,411.9 686.1,412.9 M686.1,412.9 686.9,414.3 688.6,414.0 690.5,414.1 690.4,413.7 M690.4,413.7 692.6,413.3 M690.4,413.7 690.8,414.3 690.5,415.1 M678.2,408.8 679.6,408.8 682.3,409.2 682.0,409.9 682.7,410.5 682.3,411.2 681.6,412.5 M678.2,408.8 678.8,410.2 680.5,411.9 681.6,412.5 M681.6,407.9 681.9,408.8 682.3,409.2 M682.3,411.2 683.6,412.2 683.4,412.6 M682.7,413.4 683.4,412.6 684.1,413.4 684.0,414.3 684.7,415.0 683.9,416.5 M683.4,412.6 684.9,412.9 686.1,412.9 M684.0,414.3 684.7,415.0 685.6,414.7 686.9,414.3 M672.1,390.3 672.3,389.2 672.9,387.6 672.3,385.1 673.9,383.2 674.6,381.0 675.7,378.9 677.4,378.3 679.2,377.6 M679.2,377.6 682.2,379.2 683.1,381.4 683.3,381.6 M679.2,377.6 680.6,378.0 683.2,378.2 684.0,376.6 685.8,376.5 686.9,377.5 686.5,377.8 M688.3,388.3 690.0,386.4 691.2,385.2 689.4,383.8 688.8,382.7 688.9,381.4 687.3,379.3 686.5,377.8 688.4,376.8 M651.7,396.3 653.7,396.7 M703.2,421.7 703.7,420.7 705.2,420.6 707.5,420.6 710.3,420.2 M710.3,420.2 713.1,420.0 M713.1,420.0 712.3,418.3 711.8,416.9 712.5,416.5 M712.5,416.5 711.1,415.9 710.6,414.5 709.3,414.0 708.2,414.0 M706.0,411.3 708.9,411.6 711.3,412.3 713.7,413.4 M713.7,413.4 715.5,414.4 716.3,413.6 M713.7,413.4 714.2,414.5 712.3,414.4 710.6,414.5 M712.3,414.4 713.3,415.8 714.5,416.8 714.2,417.6 M712.5,416.5 714.2,417.6 716.2,416.5 717.6,418.3 M710.3,420.2 709.4,423.4 706.8,425.4 M706.8,425.4 704.5,426.9 703.3,426.4 M702.4,425.8 703.2,425.5 704.0,424.2 703.2,423.7 M703.0,426.4 703.1,428.0 702.8,430.7 M701.7,428.3 702.7,430.9 M702.8,431.0 704.2,431.3 705.8,430.2 706.3,429.5 704.9,428.0 707.4,427.1 M707.4,427.1 706.8,425.4 M707.4,427.1 708.9,427.5 711.1,428.6 714.6,431.3 716.9,431.4 M716.9,431.4 718.1,430.0 718.5,430.2 M716.9,431.4 718.1,432.3 719.2,432.3 M713.1,420.0 714.1,421.7 715.2,422.8 714.5,423.8 714.5,424.7 715.5,425.8 717.7,427.3 718.0,428.8 719.1,430.2 M713.7,449.4 714.2,447.8 715.7,447.9 718.2,448.2 720.0,446.8 721.3,446.3 724.9,445.7 M724.9,445.7 728.5,444.3 729.1,441.5 728.4,440.5 M724.9,445.7 726.5,448.9 M723.8,438.5 725.1,440.2 728.4,440.5 M728.4,440.5 728.9,438.4 729.2,437.6 729.6,437.4 M722.7,437.5 723.3,437.8 M723.8,419.9 724.8,419.7 726.2,418.8 727.5,418.9 729.5,419.3 731.2,420.9 732.6,420.9 M732.6,420.9 732.9,422.7 732.6,424.1 732.9,425.7 733.7,428.0 734.7,428.2 734.1,430.4 M734.1,430.4 735.1,431.6 737.5,434.1 737.1,435.0 735.9,436.9 M734.1,430.4 736.1,431.0 738.3,430.9 740.6,430.3 740.5,428.9 742.4,427.6 743.7,427.5 743.5,425.8 744.4,425.4 743.9,424.5 745.0,424.0 745.2,422.3 744.6,421.6 745.9,420.6 748.1,420.3 748.5,419.9 M732.6,420.9 733.0,422.3 734.3,422.7 735.2,421.8 736.6,421.3 736.6,420.2 738.5,419.7 M738.5,419.7 740.1,420.0 742.0,419.5 742.8,419.5 742.9,418.8 743.8,418.5 745.0,420.7 746.5,419.7 748.5,419.9 M738.5,419.7 738.4,418.9 735.3,417.5 732.9,416.1 731.8,414.5 729.7,414.1 729.2,413.0 727.4,412.2 726.7,413.0 726.1,414.3 725.0,414.3 M725.0,414.3 723.6,409.1 726.3,408.3 729.6,409.9 731.0,411.2 734.2,410.9 735.9,411.9 736.2,413.3 736.8,413.4 739.0,414.7 740.0,414.1 741.7,412.9 M725.0,414.3 723.4,413.4 722.3,412.7 720.8,413.6 M741.7,412.9 744.6,412.7 745.2,411.6 747.0,412.0 750.9,412.2 752.5,413.1 M742.2,415.8 742.5,416.6 744.0,417.1 746.1,416.9 M740.1,420.0 740.5,418.6 739.0,417.2 740.2,416.6 740.8,415.8 742.2,415.8 M742.2,415.8 743.6,415.8 744.7,414.8 743.3,414.3 741.7,412.9 M715.5,407.2 712.4,404.6 711.8,403.2 713.6,402.4 713.4,401.4 715.1,399.9 717.7,400.2 720.3,401.4 722.2,400.7 724.0,400.9 727.2,401.1 725.0,399.2 725.1,397.0 729.3,396.3 732.7,394.9 734.8,395.1 735.8,396.7 738.3,396.8 741.4,396.5 743.5,397.8 747.4,401.1 750.9,400.9 753.8,402.8 756.5,403.5 M756.9,403.3 760.4,401.1 767.3,402.2 766.7,400.2 770.8,400.3 771.8,401.7 777.4,402.2 782.3,403.0 785.1,401.8 788.2,402.5 M809.0,419.2 809.1,418.5 810.5,418.0 M774.5,443.1 774.6,441.6 M784.2,458.1 784.6,455.8 784.1,453.9 782.9,451.1 783.5,449.4 781.8,447.8 781.7,446.4 782.8,444.6 784.2,443.7 M784.2,443.7 785.1,441.9 M784.2,443.7 784.9,445.0 785.7,445.0 786.0,447.8 787.1,446.8 787.9,447.2 789.5,446.7 790.6,447.9 790.8,449.4 792.1,450.9 792.1,452.2 M786.2,440.9 787.6,442.9 789.6,443.7 789.2,445.0 790.9,446.3 793.0,449.1 794.5,451.1 794.6,452.0 M792.1,452.2 792.7,452.3 794.6,452.0 M794.6,452.0 794.8,455.1 793.1,456.0 793.0,457.0 791.4,457.8 M792.1,452.2 789.0,452.3 788.3,453.3 789.2,456.0 M786.2,463.3 787.4,464.3 787.5,463.8 788.8,463.8 M798.4,470.0 799.6,471.2 801.2,471.1 802.7,470.4 804.9,470.4 806.2,467.6 805.8,466.4 808.3,466.6 M837.9,476.1 837.3,485.1 M816.1,485.5 817.3,484.8 817.4,485.6 M657.8,423.0 658.4,425.2 659.0,426.9 656.1,427.8 655.9,428.9 653.7,430.3 649.8,432.0 649.8,434.0 M649.8,434.0 649.8,435.8 645.7,435.8 645.6,439.3 644.4,440.0 644.4,442.4 639.4,442.4 M649.8,433.4 644.3,433.4 M649.8,434.0 654.5,437.2 M654.5,437.2 661.9,442.7 662.6,443.9 664.4,444.6 664.5,445.7 665.6,445.5 M654.5,437.2 652.3,437.2 653.4,449.2 653.8,450.6 648.8,450.6 646.8,451.2 646.1,450.5 645.2,451.6 M639.9,449.9 642.4,449.1 643.7,449.9 645.2,451.6 M670.5,420.4 670.1,421.7 670.3,423.5 669.3,424.8 671.2,427.2 671.9,429.7 M674.2,425.8 672.8,427.8 672.7,429.2 671.9,429.7 M671.9,429.7 672.4,432.6 672.4,435.1 672.7,437.9 675.0,439.3 M665.6,445.5 667.6,445.1 669.7,443.1 675.0,439.3 M675.0,439.3 677.9,440.6 678.9,440.0 690.1,445.0 M690.7,427.9 690.7,431.3 691.2,441.5 M691.2,441.5 691.3,444.3 690.1,444.3 690.1,445.0 M691.2,441.5 705.9,441.5 M665.6,445.5 665.6,448.8 664.8,450.8 662.0,450.9 660.6,451.3 M660.6,451.3 657.9,452.5 655.0,454.0 653.8,455.7 653.5,457.8 M660.6,451.3 661.6,453.6 663.2,455.0 664.9,456.0 M664.9,456.0 665.0,453.2 667.3,452.9 669.2,454.2 671.7,454.4 674.1,453.6 677.4,453.2 M677.4,453.2 677.2,452.0 679.7,448.7 679.7,444.4 678.9,440.0 M690.1,445.0 690.3,450.3 688.9,450.6 688.1,453.7 689.1,457.0 M677.4,453.2 678.2,454.4 678.7,455.3 679.2,457.1 679.8,458.4 677.8,458.7 679.5,461.9 M679.5,461.9 681.1,461.6 683.8,461.2 684.2,459.8 687.6,457.5 689.1,457.0 M645.2,451.6 646.1,455.0 M639.5,455.0 641.6,454.6 643.3,454.7 646.1,455.0 M639.4,453.3 641.7,453.0 643.2,453.6 641.7,453.9 639.4,454.0 M641.6,457.0 643.2,456.0 643.3,454.7 M646.1,455.0 648.8,455.0 650.0,457.0 650.4,458.1 M643.7,459.8 646.4,458.4 647.5,460.5 M647.5,460.5 645.9,462.8 M647.5,460.5 648.6,462.1 649.7,461.8 M649.7,461.8 651.0,466.3 M649.7,461.8 650.4,458.1 M650.4,458.1 653.5,457.8 656.9,458.8 M656.9,458.8 656.9,461.9 656.4,465.3 M656.9,458.8 656.9,457.0 660.4,456.8 M660.4,456.8 661.0,460.5 661.9,463.9 M660.4,456.8 661.5,457.0 662.4,459.8 662.4,463.8 M664.9,456.0 663.9,459.8 663.8,463.5 M661.5,457.0 663.2,455.0 M671.1,466.0 672.0,463.3 674.2,463.2 675.5,461.2 677.0,458.7 678.2,454.4 M679.5,461.9 678.6,464.7 679.3,466.9 680.5,469.4 M672.7,469.3 674.6,469.4 677.1,469.4 680.5,469.4 M672.7,471.1 674.6,471.1 674.6,469.4 M677.1,469.4 678.7,471.1 678.0,473.2 678.7,475.3 676.1,475.7 674.9,477.3 674.4,477.9 M680.5,469.4 683.8,467.6 M683.8,467.6 682.8,471.8 680.8,475.3 680.5,477.3 678.5,479.1 676.9,478.9 675.7,480.5 M683.8,467.6 684.9,465.3 688.7,466.7 691.9,465.4 694.9,465.3 M689.1,457.0 690.1,460.2 692.2,461.9 694.9,465.3 M690.5,460.2 693.6,459.1 695.5,459.4 697.4,458.4 699.3,458.8 701.1,455.6 701.9,455.3 702.9,459.1 703.2,459.1 M703.2,459.1 704.2,457.0 705.5,454.6 706.0,452.3 706.4,448.5 708.3,447.1 M706.0,452.3 709.1,451.9 711.3,452.6 713.4,454.9 M713.4,454.9 712.8,457.0 714.0,457.1 714.5,456.3 M714.0,457.1 715.6,459.8 719.4,461.2 720.7,461.2 717.0,465.4 713.1,467.0 M713.1,467.0 710.5,467.1 708.4,467.4 705.7,466.3 705.6,466.0 M705.6,466.0 704.4,464.7 703.1,461.9 701.8,461.2 703.2,459.1 M705.6,466.0 703.2,466.6 M703.2,466.6 699.4,467.3 699.2,467.6 M699.2,467.6 697.5,466.1 694.9,465.3 M713.1,467.0 712.0,468.5 712.1,472.5 712.7,474.9 M703.2,466.6 704.5,470.4 703.2,472.5 703.1,473.9 M703.1,473.9 707.7,476.6 709.7,479.0 M699.2,467.6 699.8,469.4 697.8,471.4 697.7,474.4 M703.1,473.9 698.8,473.9 697.7,474.4 M697.7,474.4 696.9,476.2 697.4,478.7 697.5,481.5 698.9,483.8 M698.8,473.9 699.2,475.8 698.7,478.7 697.4,478.7 M696.9,476.2 699.2,475.8 M675.7,480.5 676.7,480.7 681.3,480.7 681.8,482.9 684.9,482.2 684.8,483.6 687.8,482.6 687.9,484.3 687.7,487.7 690.5,487.6 690.3,490.5 M690.5,487.6 692.1,488.5 694.2,489.1 696.6,491.0 697.7,489.4 695.9,489.0 696.3,485.6 698.9,483.8 M690.3,490.5 687.9,490.5 687.8,494.9 689.5,496.8 M675.1,496.4 677.8,496.6 683.4,496.6 686.5,497.4 689.5,496.8 M686.5,497.8 686.3,502.9 685.1,502.9 684.9,506.8 M680.4,512.0 681.6,512.2 684.7,511.8 684.9,506.8 M684.9,506.8 685.8,509.6 688.6,507.5 691.6,508.0 693.6,505.1 696.6,503.2 M696.6,503.2 694.6,500.8 692.6,498.8 691.8,497.1 M691.8,497.1 689.5,496.8 M691.8,497.1 693.9,497.2 696.4,494.5 698.3,494.1 M698.3,494.1 701.6,491.9 M701.6,491.9 702.1,489.1 701.7,485.5 M698.9,483.8 701.7,485.5 M701.7,485.5 703.1,485.6 704.1,488.4 M704.1,488.4 707.3,488.7 711.0,486.9 M704.1,488.4 705.1,491.2 705.0,494.6 704.2,496.1 703.2,493.9 703.5,492.4 701.6,491.9 M698.3,494.1 701.2,495.6 701.3,498.8 700.5,501.9 699.0,503.5 M699.0,503.5 696.6,503.2 M699.0,503.5 699.7,506.4 699.5,508.4 700.5,509.6 M693.1,513.4 695.0,512.2 696.0,513.3 694.6,514.8 693.1,513.4 M698.3,508.4 699.5,508.7 699.3,510.1 698.2,509.8 698.3,508.4" fill="none" stroke="#fff" stroke-width="0.55" stroke-linejoin="round" stroke-linecap="round"/>
<g id="wmc">
<path d="M525.2,403.6 555.6,403.6 555.9,403.0 556.1,404.0 558.7,404.6 561.3,405.0 562.7,404.6 565.8,406.5 565.9,407.0 566.7,407.7 567.4,408.7 566.3,411.9 565.1,413.0 565.5,413.7 570.1,412.2 570.3,411.5 571.6,411.1 573.5,410.5 575.7,409.1 579.7,409.1 580.6,408.7 581.5,407.7 583.4,405.8 584.4,405.9 584.8,406.3 584.2,408.0 584.4,408.8 584.7,409.4 582.7,410.1 580.5,411.1 579.5,412.5 579.9,413.6 578.0,414.1 575.2,414.8 574.7,415.4 574.0,416.8 572.9,417.6 571.9,418.9 570.9,420.3 570.8,421.4 570.8,422.8 569.2,423.5 567.4,424.7 565.7,425.7 563.4,427.2 562.4,428.8 562.0,429.7 562.5,432.3 562.7,434.7 562.0,436.8 561.1,437.1 560.4,435.5 559.8,433.3 560.0,431.6 559.0,430.2 557.5,430.6 555.9,429.6 554.1,429.7 552.2,429.9 552.2,431.4 550.7,431.3 549.0,430.7 546.8,430.6 545.2,431.3 543.1,432.6 541.8,434.0 541.5,435.9 539.2,433.7 537.7,430.4 535.5,431.6 533.9,430.7 532.4,427.6 530.4,427.6 530.1,428.3 526.8,428.3 522.8,426.6 520.0,426.6 519.1,424.5 516.9,423.7 516.6,420.9 516.7,419.2 516.3,416.8 516.3,415.5 517.9,413.3 518.2,411.9 521.4,407.4 522.6,404.4 524.4,404.6 525.2,403.6Z M500.5,381.8 503.6,381.1 505.5,381.2 507.7,381.0 507.3,380.1 507.5,379.3 506.4,378.6 508.7,377.8 512.1,377.0 515.2,376.2 518.3,375.6 520.9,375.0 522.5,375.5 523.9,376.1 526.6,376.1 529.1,376.5 532.1,377.0 518.9,388.5 520.5,388.8 520.8,390.2 522.4,389.6 524.1,389.4 524.1,390.5 523.7,392.6 524.8,394.2 523.5,395.5 522.7,394.8 522.3,393.5 523.1,391.5 521.4,391.1 520.5,390.5 519.8,389.2 517.5,388.9 515.6,388.8 514.6,387.9 512.2,388.3 509.7,389.2 506.8,390.0 508.7,388.3 511.2,387.4 508.3,388.1 505.0,389.8 502.4,391.3 498.6,392.8 495.1,394.2 491.3,395.2 488.5,395.9 486.3,396.1 491.1,394.4 494.3,393.5 498.2,391.8 500.0,390.6 498.5,390.6 495.5,390.6 497.4,388.9 495.7,388.3 496.3,387.0 496.6,386.4 499.2,385.1 501.5,384.8 503.9,384.5 505.5,383.2 503.6,383.2 500.9,383.1 500.5,381.8Z M503.2,392.4 500.8,392.7 503.1,391.3 504.2,391.7Z" fill="#134862" stroke="#fff" stroke-width="0.3" stroke-linejoin="round"/>
<path d="M595.5,466.3 596.8,469.7 597.4,471.4 596.8,472.5 599.3,474.6 601.2,473.5 603.7,474.6 604.4,476.0 606.3,475.8 608.2,476.5 610.0,476.4 611.9,477.8 613.6,479.3 615.7,479.7 616.5,481.5 616.7,482.9 616.2,484.9 614.6,487.0 613.5,488.8 612.3,490.5 611.7,492.5 611.9,495.3 611.4,497.4 610.9,499.9 609.8,502.2 609.3,503.6 608.7,504.3 606.9,504.3 605.1,505.3 603.3,506.0 601.6,507.5 601.1,509.1 601.2,511.6 599.9,513.7 598.9,515.4 597.8,517.2 596.7,519.1 596.3,517.4 594.2,515.8 592.9,515.1 590.8,514.3 591.8,512.3 592.7,511.5 594.6,510.2 594.8,509.1 593.6,507.9 593.7,505.8 592.4,505.7 591.9,503.6 589.1,503.1 588.6,500.4 588.8,498.8 589.0,497.7 587.9,496.4 587.7,495.0 585.5,495.0 584.8,491.6 582.9,490.9 581.0,489.8 579.1,489.1 578.6,487.4 578.4,485.9 576.9,486.2 575.2,487.3 573.3,487.6 571.9,487.7 571.8,485.6 569.8,486.3 568.6,485.5 568.8,484.9 567.4,482.9 567.8,482.0 568.6,480.8 568.7,479.7 570.0,478.7 571.3,478.3 572.4,478.3 573.0,474.2 572.5,473.2 572.2,471.8 573.2,471.1 572.5,470.1 574.8,470.0 576.0,470.8 576.9,471.4 577.9,471.4 579.5,470.4 579.8,469.0 580.6,469.4 579.1,466.7 581.1,467.1 581.5,466.9 583.0,466.3 584.0,465.2 584.9,465.3 585.1,466.3 585.5,467.6 584.9,469.0 586.1,470.7 587.4,470.4 588.6,469.8 589.9,469.8 590.0,469.0 591.8,469.3 593.0,469.3 594.0,469.4 594.9,468.0Z" fill="#88b2c7" stroke="#fff" stroke-width="0.5" stroke-linejoin="round"/>
<path d="M746.1,417.1 746.8,415.7 749.0,415.4 750.7,414.4 752.5,413.1 752.6,411.6 751.2,409.4 753.4,408.8 752.8,406.1 755.8,406.2 755.2,404.4 756.5,403.5 756.9,403.3 758.3,404.6 760.2,405.2 762.1,406.9 762.9,408.8 766.0,409.2 768.6,410.2 770.6,412.2 774.9,412.5 777.0,412.6 780.5,413.6 781.3,413.8 783.6,412.7 786.2,412.3 787.6,410.9 786.8,409.1 788.8,409.4 789.4,408.6 790.8,408.1 791.8,407.2 794.1,406.8 791.8,405.1 790.8,405.4 788.5,405.1 788.2,402.5 789.6,402.9 790.7,402.1 790.0,399.9 789.8,398.7 788.8,398.4 789.8,397.6 791.7,397.5 794.5,398.0 797.8,400.5 800.0,402.5 802.6,403.0 804.4,403.7 805.8,405.4 807.5,405.2 809.0,404.4 809.6,404.4 809.5,405.9 810.6,409.0 809.0,408.8 808.5,409.4 809.9,411.2 810.0,412.6 808.6,411.9 809.0,412.7 807.4,413.3 808.0,414.1 806.3,413.6 806.0,414.8 804.9,416.1 803.0,416.9 802.0,417.8 801.7,415.4 800.2,414.8 799.4,416.6 797.8,417.5 798.6,418.6 800.3,419.9 802.0,419.2 804.5,420.0 802.8,421.4 802.1,423.1 803.7,424.2 805.0,426.2 806.9,427.8 807.4,428.9 806.0,429.7 807.9,430.9 808.2,432.6 807.3,434.4 806.7,436.1 805.8,437.8 804.2,439.3 802.6,440.5 800.9,441.0 799.2,441.9 796.8,442.4 796.5,443.9 795.8,442.2 794.0,442.0 792.3,441.6 791.8,440.3 789.9,439.6 788.5,440.6 786.6,440.5 786.2,440.9 786.0,442.6 785.1,441.9 784.1,442.2 782.7,441.3 782.9,440.2 781.9,438.6 780.3,438.6 780.2,436.9 781.1,436.0 780.6,433.7 778.8,432.6 777.0,431.2 775.6,431.3 773.3,432.3 771.9,433.3 770.2,432.7 768.8,434.0 768.6,434.0 767.6,433.1 765.6,433.0 764.3,432.6 762.3,431.7 760.2,430.2 758.3,429.9 756.3,428.9 755.1,428.0 755.5,426.6 754.7,425.9 754.5,424.1 752.6,422.4 750.3,422.0 749.4,420.6 748.5,419.9 748.0,418.2Z M795.1,445.4 796.3,446.8 797.4,446.0 797.8,444.7 796.5,444.1Z" fill="#3a6b84" stroke="#fff" stroke-width="0.4" stroke-linejoin="round"/>
<path d="M744.2,439.1 744.9,438.2 747.5,438.1 746.1,436.2 745.2,434.7 746.1,433.0 748.3,431.6 749.7,430.2 750.3,428.6 749.7,426.6 748.9,425.9 748.3,424.1 749.0,423.4 750.3,422.0 752.6,422.4 754.5,424.1 754.7,425.9 755.5,426.6 755.1,428.0 756.3,428.9 758.3,429.9 757.6,431.9 759.5,433.0 762.1,433.8 764.1,434.7 766.0,435.1 768.0,435.2 767.6,433.1 768.6,434.0 769.0,434.7 770.0,434.8 772.6,434.7 771.9,433.3 773.3,432.3 775.6,431.3 777.0,431.2 778.6,432.6 778.6,434.1 776.7,435.5 776.4,436.9 775.9,438.8 775.1,439.3 774.7,441.5 773.7,439.1 772.7,439.6 772.4,438.5 773.6,437.2 770.7,436.9 770.1,435.5 768.9,435.4 768.3,436.1 768.4,437.4 769.3,438.4 769.5,439.8 770.1,441.5 770.2,441.7 769.0,441.9 767.8,442.4 767.7,443.6 766.3,444.7 764.8,446.3 763.0,448.5 761.9,449.5 760.5,450.6 760.5,453.4 760.4,455.6 760.5,458.0 759.5,459.4 758.7,459.9 757.7,461.1 756.4,459.8 755.7,457.7 754.5,455.6 753.7,453.4 753.0,451.3 751.9,449.2 751.0,447.1 750.6,445.4 750.2,442.9 749.7,442.6 748.0,443.3 745.7,441.5 746.9,440.2 744.6,439.6Z" fill="#618fa5" stroke="#fff" stroke-width="0.4" stroke-linejoin="round"/>
<path d="M821.6,414.0 822.7,413.6 825.0,413.3 826.4,411.5 824.3,410.5 820.2,408.4 821.5,411.2 820.4,411.6 820.7,412.9Z M823.4,414.1 825.7,416.8 825.6,418.9 826.6,421.0 827.1,422.1 826.5,423.1 825.4,423.5 823.4,423.7 823.5,424.5 822.6,425.2 821.2,424.1 819.3,424.0 817.8,424.7 816.5,424.5 816.3,423.8 817.7,422.4 819.7,422.3 821.4,422.1 821.6,420.6 821.7,419.6 823.1,419.7 823.5,418.2 823.1,416.4 822.3,415.1Z M818.9,425.9 820.8,425.5 820.9,424.2 819.0,424.5Z M817.2,428.5 818.4,428.2 818.2,425.9 816.6,424.7 815.4,425.2 815.8,426.4Z" fill="#a9d0e3" stroke="#fff" stroke-width="0.2" stroke-linejoin="round"/>
<path d="M658.3,411.3 658.9,409.8 659.1,407.7 658.0,406.1 655.2,404.7 657.1,403.9 658.5,404.0 658.6,402.8 660.1,403.2 660.6,402.6 662.0,401.9 663.1,400.9 663.6,401.3 665.0,402.2 665.8,402.5 666.8,402.9 667.4,402.9 669.4,403.6 668.8,405.5 668.2,405.7 667.2,407.3 668.0,407.2 668.3,407.9 668.3,409.0 668.0,409.8 669.1,410.4 668.9,410.8 667.2,411.8 665.0,411.2 664.0,412.6 662.5,412.7 661.2,412.2 659.8,412.2Z" fill="#bfe4f6" stroke="#fff" stroke-width="0.4" stroke-linejoin="round"/>
<path d="M667.8,397.4 669.4,397.1 669.6,396.1 669.5,395.6 670.7,395.7 672.0,396.4 673.3,396.4 674.7,396.3 675.6,397.0 675.6,398.4 676.2,399.5 676.7,400.9 675.9,400.9 673.7,401.8 675.6,403.9 674.8,404.6 674.8,405.7 673.9,405.4 672.1,405.7 671.1,405.7 668.8,405.5 669.4,403.6 667.4,402.9 667.1,401.9 666.9,401.1 666.9,399.7 667.9,399.1 668.1,397.8Z" fill="#b7ddef" stroke="#fff" stroke-width="0.4" stroke-linejoin="round"/>
</g>
<polyline points="485.2,396.5 482.8,397.4 480.1,398.0 477.8,398.6 475.1,399.1 472.6,399.4 469.7,399.8 467.6,400.1" fill="none" stroke="#134862" stroke-width="0.7" stroke-dasharray="1.6 1.8" opacity="0.45"/>
<circle cx="467.8" cy="444.8" r="0.8" fill="#134862"/>
<circle cx="467.1" cy="443.1" r="0.4" fill="#134862"/>
<circle cx="465.4" cy="442.2" r="0.35" fill="#134862"/>
</svg>
<div class="abs" id="ctitle" style="left:623px;top:257px;width:176px;height:26px;line-height:26px;text-align:left;font-size:20px;font-weight:300;letter-spacing:2.5px;word-spacing:-4.8px;color:#595959;white-space:pre">グラフ タイトル</div>
<div class="abs" style="left:902px;top:306px;width:76px;height:18px;line-height:18px;font-size:13.8px;font-weight:300;color:#595959;white-space:pre;letter-spacing:.5px">ユーザー数</div>
<div class="abs" style="left:907.5px;top:340px;width:11px;height:101px;background:linear-gradient(#134862,#bfe4f6)"></div>
<div class="abs" style="left:924.3px;top:333px;line-height:16px;font-size:12.6px;color:#595959">300</div>
<div class="abs" style="left:924.3px;top:434.800px;line-height:16px;font-size:12.6px;color:#595959">80</div>
<div class="abs" style="left:838px;top:637px;line-height:14px;font-size:9.3px;color:#595959;white-space:pre;transform:scaleX(.97);transform-origin:0 50%">提供元: Bing</div>
<svg class="abs" style="left:0;top:0" width="1024" height="690" viewBox="0 0 1024 690">
<g fill="#fff" stroke="#666" stroke-width="1.5">
<circle cx="413" cy="241" r="3.7"/><circle cx="701.5" cy="241" r="3.7"/><circle cx="990" cy="241" r="3.7"/>
<circle cx="413" cy="451" r="3.7"/><circle cx="990" cy="451" r="3.7"/>
<circle cx="413" cy="661" r="3.7"/><circle cx="701.5" cy="661" r="3.7"/><circle cx="990" cy="661" r="3.7"/>
</g>
<rect x="1001.5" y="241.5" width="24" height="22" fill="#fff" stroke="#8a8a8a" stroke-width="1"/>
<path d="M1004.5 252.5h17M1013 244v17" stroke="#4aa564" stroke-width="1.2" fill="none"/>
<rect x="1001.5" y="272" width="24" height="22.5" fill="#fff" stroke="#8a8a8a" stroke-width="1"/>
<path d="M1022 276.5l-11 11.5" stroke="#666" stroke-width="2.2" stroke-linecap="round" fill="none"/>
<path d="M1022 276.5l-11 11.5" stroke="#fff" stroke-width="1" stroke-linecap="round" fill="none"/>
<path d="M1003.5 291c2.5-.3 3-2.5 4.5-4.2 1.6-1.2 3.6-.6 4.2 1 .5 2-1.2 3.6-3.2 4-2 .4-4 .2-5.500-.8z" fill="#3f8fd6"/>
</svg>

<svg class="abs" style="left:0;top:0" width="1024" height="690" viewBox="0 0 1024 690">
<!-- excel logo -->
<rect x="15.4" y="1.5" width="9.8" height="12.8" rx="1.2" fill="#21a366"/>
<rect x="15.4" y="1.5" width="9.8" height="3.4" rx="1" fill="#5fcf7c"/>
<rect x="20.3" y="1.5" width="4.9" height="3.4" rx="1" fill="#9be07d"/>
<rect x="15.4" y="4.9" width="4.9" height="3.2" fill="#33c481"/>
<rect x="20.3" y="4.9" width="4.9" height="3.2" fill="#4bd58c"/>
<rect x="15.4" y="11" width="9.8" height="3.3" rx="1" fill="#185c37"/>
<rect x="12.9" y="5.6" width="7" height="7.9" rx="1" fill="#107c41"/>
<text x="16.4" y="11.9" font-family="'Liberation Sans',sans-serif" font-size="7.8" font-weight="bold" text-anchor="middle" fill="#fff">x</text>
<!-- toggle -->
<rect x="84" y="-0.8" width="37" height="16" rx="8" fill="#5a5a5a" stroke="#9a9a9a" stroke-width="1"/>
<circle cx="91.8" cy="7.3" r="5.7" fill="#fff"/>
<!-- save -->
<g fill="none" stroke="#e2e2e2" stroke-width="1.1">
<path d="M132.2 2h11.4l1.4 1.4v10.8h-12.800z"/>
<path d="M134.800 2v4.300h7.400v-4.300M135 14.200v-4.700h7v4.700"/>
</g>
<!-- undo -->
<path d="M156.500 2.200v4.600h4.600M156.800 6.500c2-3.200 5.400-4.600 8.200-3.200 2.800 1.500 3.300 4.600 1.300 6.800l-5.600 4.800" fill="none" stroke="#e6e6e6" stroke-width="1.2"/>
<path d="M173.300 6.600l2.100 2 2.100-2" fill="none" stroke="#e6e6e6" stroke-width="1.1"/>
<!-- redo dim -->
<path d="M199.300 2.200v4.600h-4.600M199 6.500c-2-3.200-5.400-4.600-8.200-3.200-2.800 1.500-3.300 4.600-1.300 6.800l5.600 4.800" fill="none" stroke="#6f6f6f" stroke-width="1.2"/>
<path d="M205.200 6.600l2.100 2 2.100-2" fill="none" stroke="#6f6f6f" stroke-width="1.1"/>
<!-- pen dim -->
<path d="M219.300 14.300l1-3.800 8.200-8.200c1-.9 2.300-.8 3 0 .8.800.8 2-.1 2.900l-8.200 8.100z" fill="none" stroke="#6f6f6f" stroke-width="1.1"/>
<circle cx="228.700" cy="11.200" r="2.900" fill="#4f4f4f" stroke="#6f6f6f" stroke-width="1.1"/>
<path d="M226.700 13.200l4-4" stroke="#6f6f6f" stroke-width="1"/>
<!-- white rect "100" -->
<rect x="242.200" y="3.900" width="13.300" height="8.300" fill="#f4f4f4"/>
<text x="248.850" y="10.600" font-family="'Liberation Sans',sans-serif" font-size="7.200" text-anchor="middle" fill="#6a6a6a" textLength="10.500" lengthAdjust="spacingAndGlyphs">100</text>
<!-- customize QAT -->
<path d="M269 5.800h6.300" stroke="#e6e6e6" stroke-width="1.1"/>
<path d="M269.300 7.800l2.850 2.700 2.850-2.700" fill="none" stroke="#e6e6e6" stroke-width="1.1"/>
<!-- search glass -->
<circle cx="657.500" cy="6.800" r="3.600" fill="none" stroke="#444" stroke-width="1.1"/>
<path d="M654.900 9.500l-4 4.200" stroke="#444" stroke-width="1.2"/>
<!-- active tab underline -->
<rect x="595.700" y="47" width="69.300" height="2" fill="#8fd9b3"/>

<!-- ribbon: add chart element -->
<rect x="27.500" y="69" width="7.200" height="12.700" fill="#a9d3f5" stroke="#2b78c2" stroke-width="1"/>
<rect x="34.700" y="59.500" width="7.300" height="22.200" fill="#f2f2f2" stroke="#6a6a6a" stroke-width="1"/>
<rect x="42" y="63.700" width="6" height="18" fill="#b3b3b3" stroke="#6a6a6a" stroke-width="1"/>
<path d="M38.600 77h12.400M44.700 70.700v12.600" stroke="#2e8b3d" stroke-width="1.400" fill="none"/>
<!-- quick layout -->
<path d="M74.800 65.300h23M74.800 68.400h23M74.800 71.500h23M74.800 74.700h23M74.800 77.800h23M74.800 81.200h23M75.300 62.500v18.700" stroke="#2b78c2" stroke-width="1" fill="none"/>
<rect x="79.500" y="59" width="14.400" height="3.600" rx="1.200" fill="#a9d3f5" stroke="#2b78c2" stroke-width="1"/>
<rect x="80.300" y="72.300" width="4.200" height="8.900" fill="#f4f4f4" stroke="#666" stroke-width=".9"/>
<rect x="84.500" y="67.200" width="4.400" height="14" fill="#a3a3a3" stroke="#555" stroke-width=".9"/>
<rect x="88.900" y="75.400" width="3.600" height="5.800" fill="#f4f4f4" stroke="#666" stroke-width=".9"/>
<!-- palette -->
<path d="M141.500 59.800c6.300-.4 11 4.300 11 10.200 0 6.200-4.300 11.200-8.300 11.200-2.800 0-4.200-1.800-4.200-4.300 0-2.600-1.200-4.400-3.600-4.200-2.900.2-5.800.1-6.300-2.500-.8-4.600 4.700-10 11.400-10.400z" fill="#f2f2f2" stroke="#555" stroke-width="1.100"/>
<circle cx="135.800" cy="67.300" r="1.600" fill="#2b7cd3"/><circle cx="140.900" cy="65" r="1.600" fill="#2e8b3d"/><circle cx="146.400" cy="66.500" r="1.600" fill="#b8741a"/><circle cx="147.800" cy="72" r="1.600" fill="#d13438"/><circle cx="144.700" cy="77" r="1.600" fill="#9b1b72"/>
<!-- chevrons under labels -->
<g fill="none" stroke="#444" stroke-width="1">
<path d="M50.300 103.500l2.100 2 2.100-2"/><path d="M103.400 103.500l2.100 2 2.100-2"/><path d="M150 103.500l2.100 2 2.100-2"/>
</g>
<!-- gallery frame -->
<path d="M162 62.700h304a3 3 0 0 1 3 3v41a3 3 0 0 1-3 3h-304z" fill="none" stroke="#9e9e9e" stroke-width="1"/>
<path d="M450.300 62.700v47" stroke="#a6a6a6" stroke-width="1"/>
<path d="M456.400 83.200h5.800" stroke="#444" stroke-width="1"/><path d="M456.700 85.200l2.600 2.400 2.600-2.400" fill="none" stroke="#444" stroke-width="1"/>
<rect x="162.600" y="63.500" width="71.200" height="44.800" fill="#c2c2c2" stroke="#7c7c7c" stroke-width="1.200"/>
<rect x="165.700" y="66.200" width="66.100" height="40.100" fill="#fff"/>
<rect x="237.300" y="66.600" width="65.600" height="39.400" fill="#fff"/>
<rect x="310" y="67.400" width="63.800" height="38.200" fill="#595959"/>
<rect x="381.200" y="67.400" width="64.700" height="38.200" fill="#000"/>
<g transform="translate(193.500 88.450) scale(.1146 .117) translate(-660.400 -473)"><use href="#wml" color="#ebebeb"/><use href="#wmc"/></g>
<g transform="translate(270.900 91.100) scale(.1194 .1208) translate(-660.400 -473)"><use href="#wml" color="#dcdcdc"/><use href="#wmc"/></g>
<g transform="translate(337.100 88.450) scale(.1105 .117) translate(-660.400 -473)"><use href="#wml" color="#e0e0e0"/><use href="#wmc"/></g>
<g transform="translate(408.200 88.450) scale(.1167 .117) translate(-660.400 -473)"><use href="#wml" color="#2f2f2f"/><use href="#wmc" opacity=".8"/></g>
<path d="M189.600 69.700h17.200M264 69.700h17.200" stroke="#9c9c9c" stroke-width=".9" stroke-dasharray="2 .7"/>
<path d="M332.500 69.600h17.500M403.500 69.600h17.500" stroke="#c4c4c4" stroke-width=".9" stroke-dasharray="2 .7"/>
<path d="M219.500 74.200h6M258.500 74.600h7" stroke="#9c9c9c" stroke-width=".8"/>
<path d="M363.500 74.300h5M434.500 74.300h5" stroke="#a8a8a8" stroke-width=".7"/>
<rect x="221.300" y="77.900" width="2" height="11.700" fill="#c3dbe8"/>
<rect x="268.500" y="73.600" width="12.200" height="1.800" fill="#b3d3e4"/>
<rect x="364.300" y="77" width="1.700" height="11.500" fill="#5f8fae"/>
<rect x="435.300" y="77" width="1.700" height="11.500" fill="#3c6f90"/>
<path d="M213.500 104.400h5.300M293 104.300h5.300" stroke="#9a9a9a" stroke-width=".8"/>
<path d="M356.500 104h5.300M427.500 104h5.300" stroke="#a2a2a2" stroke-width=".7"/>
<!-- switch row/col (dim) -->
<g fill="#dcdcdc" stroke="#b4b4b4" stroke-width="1">
<rect x="492.100" y="62.200" width="23.100" height="17.100"/>
<path d="M492.100 67.900h23.100M492.100 73.600h23.100M499.800 62.200v17.100M507.500 62.200v17.100" fill="none"/>
</g>
<path d="M492.800 67.500v-7.300h13M490.600 64.600l2.200 2.600 2.200-2.600M503.400 57.800l2.600 2.400-2.600 2.400" fill="none" stroke="#a9a9a9" stroke-width="1"/>
<!-- select data -->
<rect x="529.200" y="61.800" width="22.700" height="17.500" fill="#f7f7f7" stroke="#666" stroke-width="1"/>
<rect x="529.200" y="61.800" width="15.100" height="11.700" fill="#4a90d9" stroke="#2b6cb0" stroke-width="1"/>
<path d="M529.200 67.600h22.700M529.200 73.500h22.700M536.800 61.800v17.500M544.300 61.800v17.500" fill="none" stroke="#666" stroke-width=".8"/>
<path d="M529.200 67.600h15.100M536.800 61.800v11.700" fill="none" stroke="#2b6cb0" stroke-width=".9"/>
<rect x="540.500" y="70" width="14" height="14" fill="#bfbfbf" stroke="none"/>
<rect x="541.500" y="76.400" width="3.900" height="6.800" fill="#777" stroke="#444" stroke-width=".9"/>
<rect x="545.400" y="71.100" width="3.900" height="12.100" fill="#f4f4f4" stroke="#555" stroke-width=".9"/>
<rect x="549.300" y="73.900" width="4.400" height="9.300" fill="#a9d3f5" stroke="#2b78c2" stroke-width=".9"/>
<!-- change chart type -->
<rect x="587" y="68.600" width="7.300" height="12.700" fill="#a3a3a3" stroke="#555" stroke-width="1"/>
<rect x="594.300" y="59.800" width="6.400" height="21.500" fill="#f2f2f2" stroke="#666" stroke-width="1"/>
<rect x="600.700" y="63.700" width="7.300" height="17.600" rx="1" fill="#a9d3f5" stroke="#2b78c2" stroke-width="1"/>
<!-- move chart -->
<path d="M643 60.200h21.600v19.500h-18.600l-3-3z" fill="#f4f4f4" stroke="#666" stroke-width="1"/>
<path d="M643 65.100h21.600M643 70h21.600M643 74.900h21.600M650.200 60.200v19.500M657.400 60.200v19.500" fill="none" stroke="#666" stroke-width=".8"/>
<rect x="653.800" y="70" width="14" height="14" fill="#bfbfbf"/>
<rect x="654.800" y="76.400" width="3.900" height="6.800" fill="#777" stroke="#444" stroke-width=".9"/>
<rect x="658.700" y="71.100" width="3.900" height="12.100" fill="#f4f4f4" stroke="#555" stroke-width=".9"/>
<rect x="662.600" y="73.900" width="4.300" height="9.300" fill="#a9d3f5" stroke="#2b78c2" stroke-width=".9"/>

<!-- formula bar --><g transform="translate(0 .8)">
<path d="M137.300 152.300l3.900 3.800 3.900-3.800" fill="none" stroke="#d6d6d6" stroke-width="1.200"/>
<circle cx="158" cy="150.300" r=".9" fill="#cfcfcf"/><circle cx="158" cy="153.800" r=".9" fill="#cfcfcf"/><circle cx="158" cy="157.300" r=".9" fill="#cfcfcf"/>
<path d="M172.800 149.500l8 8.300M180.800 149.500l-8 8.300" stroke="#7d7d7d" stroke-width="1" fill="none"/>
<path d="M189.300 153.800l3.800 4 8.800-8.600" stroke="#7d7d7d" stroke-width="1" fill="none"/>
<path d="M226.300 152.300l3.700 3.600 3.700-3.600" fill="none" stroke="#bdbdbd" stroke-width="1.100"/>
</g>
</svg>

<div id="labels">
<span class="t" style="left:38.8px;top:0.1px;font-size:10.5px;color:#e6e6e6;transform:scaleX(0.940);">自動保存</span>
<span class="t" style="left:102.0px;top:0.0px;font-size:10.5px;color:#e6e6e6;transform:scaleX(0.705);">オフ</span>
<span class="t" style="left:296.5px;top:0.8px;font-size:11px;color:#e6e6e6;transform:scaleX(0.939);">Book1  -  Excel</span>
<span class="t" style="left:672.0px;top:0.2px;font-size:10.5px;color:#444;transform:scaleX(1.000);">検索</span>
<span class="t" style="left:9.0px;top:33.6px;font-size:11px;color:#e6e6e6;transform:scaleX(0.693);">ファイル</span>
<span class="t" style="left:54.0px;top:33.6px;font-size:11px;color:#e6e6e6;transform:scaleX(0.826);">ホーム</span>
<span class="t" style="left:97.0px;top:33.6px;font-size:11px;color:#e6e6e6;transform:scaleX(0.932);">挿入</span>
<span class="t" style="left:134.0px;top:33.6px;font-size:11px;color:#e6e6e6;transform:scaleX(0.932);">描画</span>
<span class="t" style="left:171.5px;top:33.6px;font-size:11px;color:#e6e6e6;transform:scaleX(0.765);">ページ レイアウト</span>
<span class="t" style="left:258.5px;top:33.6px;font-size:11px;color:#e6e6e6;transform:scaleX(0.977);">数式</span>
<span class="t" style="left:294.7px;top:33.6px;font-size:11px;color:#e6e6e6;transform:scaleX(0.812);">データ</span>
<span class="t" style="left:336.5px;top:33.6px;font-size:11px;color:#e6e6e6;transform:scaleX(0.964);">校閲</span>
<span class="t" style="left:373.0px;top:33.6px;font-size:11px;color:#e6e6e6;transform:scaleX(0.955);">表示</span>
<span class="t" style="left:409.7px;top:33.6px;font-size:11px;color:#e6e6e6;transform:scaleX(0.964);">自動化</span>
<span class="t" style="left:457.0px;top:33.6px;font-size:11px;color:#e6e6e6;transform:scaleX(0.955);">開発</span>
<span class="t" style="left:493.0px;top:33.6px;font-size:11px;color:#e6e6e6;transform:scaleX(0.803);">ヘルプ</span>
<span class="t" style="left:537.7px;top:33.5px;font-size:11px;color:#e6e6e6;transform:scaleX(1.076);">Acrobat</span>
<span class="t" style="left:595.7px;top:33.6px;font-size:11px;color:#8fd9b3;transform:scaleX(0.787);">グラフのデザイン</span>
<span class="t" style="left:680.0px;top:33.6px;font-size:11px;color:#8fd9b3;transform:scaleX(0.955);">書式</span>
<span class="t" style="left:17.5px;top:85.0px;font-size:10.5px;color:#2b2b2b;transform:scaleX(0.762);">グラフ要素</span>
<span class="t" style="left:19.5px;top:97.1px;font-size:10.5px;color:#2b2b2b;transform:scaleX(0.810);">を追加</span>
<span class="t" style="left:72.5px;top:85.0px;font-size:10.5px;color:#2b2b2b;transform:scaleX(0.631);">クイック</span>
<span class="t" style="left:63.7px;top:97.1px;font-size:10.5px;color:#2b2b2b;transform:scaleX(0.667);">レイアウト</span>
<span class="t" style="left:31.0px;top:118.0px;font-size:10.5px;color:#2b2b2b;transform:scaleX(0.688);">グラフのレイアウト</span>
<span class="t" style="left:132.5px;top:85.0px;font-size:10.5px;color:#2b2b2b;transform:scaleX(0.857);">色の</span>
<span class="t" style="left:127.0px;top:97.1px;font-size:10.5px;color:#2b2b2b;transform:scaleX(0.890);">変更</span>
<span class="t" style="left:271.0px;top:118.0px;font-size:10.5px;color:#2b2b2b;transform:scaleX(0.700);">グラフ スタイル</span>
<span class="t" style="left:487.0px;top:85.0px;font-size:10.5px;color:#8e8e8e;transform:scaleX(0.921);">行/列の</span>
<span class="t" style="left:487.0px;top:97.1px;font-size:10.5px;color:#8e8e8e;transform:scaleX(0.786);">切り替え</span>
<span class="t" style="left:525.5px;top:85.0px;font-size:10.5px;color:#2b2b2b;transform:scaleX(0.726);">データの</span>
<span class="t" style="left:531.0px;top:97.1px;font-size:10.5px;color:#2b2b2b;transform:scaleX(0.929);">選択</span>
<span class="t" style="left:510.0px;top:118.0px;font-size:10.5px;color:#2b2b2b;transform:scaleX(0.714);">データ</span>
<span class="t" style="left:573.7px;top:85.0px;font-size:10.5px;color:#2b2b2b;transform:scaleX(0.751);">グラフの種類</span>
<span class="t" style="left:583.7px;top:97.1px;font-size:10.5px;color:#2b2b2b;transform:scaleX(0.889);">の変更</span>
<span class="t" style="left:588.0px;top:118.0px;font-size:10.5px;color:#2b2b2b;transform:scaleX(0.929);">種類</span>
<span class="t" style="left:640.0px;top:85.0px;font-size:10.5px;color:#2b2b2b;transform:scaleX(0.655);">グラフの</span>
<span class="t" style="left:644.0px;top:97.1px;font-size:10.5px;color:#2b2b2b;transform:scaleX(0.905);">移動</span>
<span class="t" style="left:644.0px;top:118.0px;font-size:10.5px;color:#2b2b2b;transform:scaleX(0.905);">場所</span>
<span class="t" style="left:13.0px;top:146.8px;font-size:11px;color:#dcdcdc;transform:scaleX(1.083);">グラフ 6</span>
<span class="t" style="left:211.0px;top:146.0px;font-size:13.5px;color:#dedede;transform:scaleX(0.933);font-family:'Liberation Serif',serif;font-style:italic;font-weight:bold">fx</span>
</div>
</div>
</body>
</html>
